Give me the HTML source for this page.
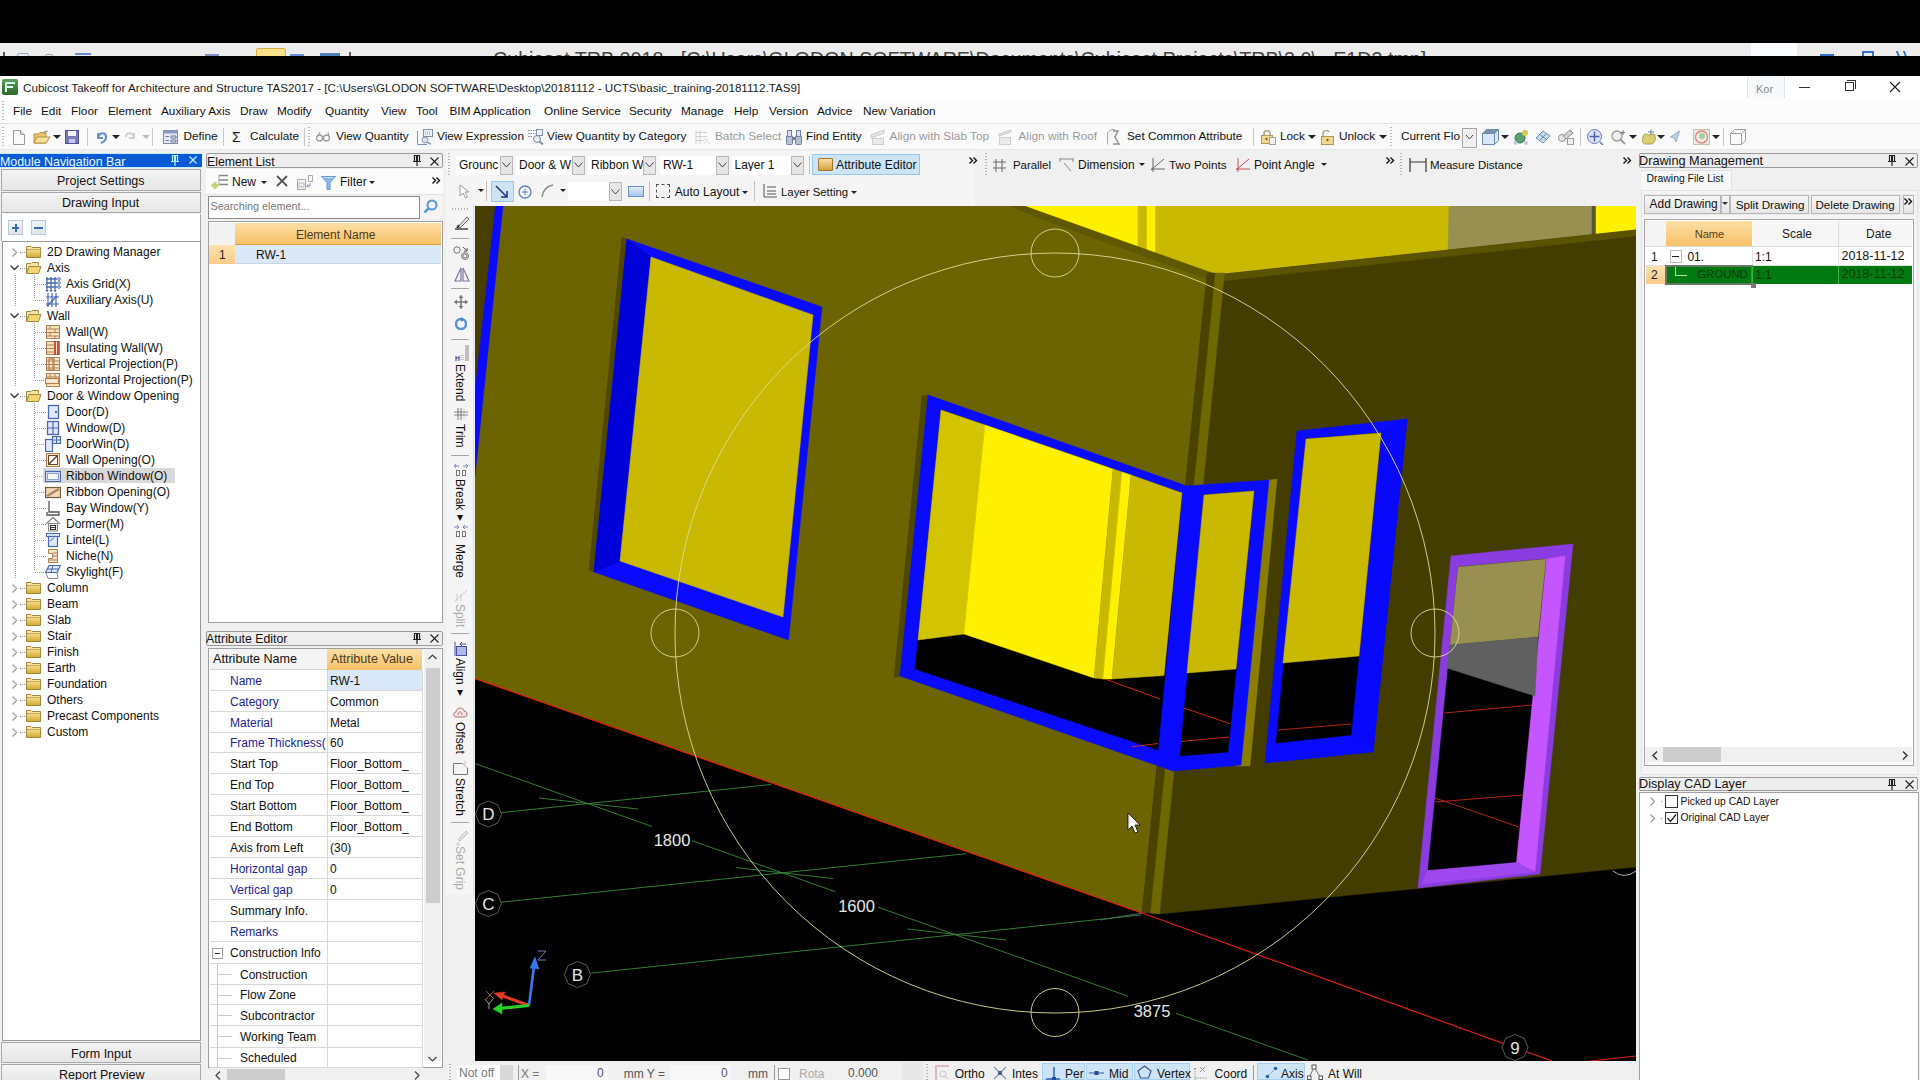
<!DOCTYPE html>
<html><head><meta charset="utf-8"><style>
html,body{margin:0;padding:0;width:1920px;height:1080px;overflow:hidden;background:#f0f0f0;font-family:"Liberation Sans", sans-serif}
body>div,body>svg{position:absolute}
div{box-sizing:border-box}
.t{white-space:pre;transform-origin:0 0}
</style></head><body>
<div style="left:0px;top:0px;width:1920px;height:43px;background:#000"></div>
<div style="left:0px;top:43px;width:1920px;height:13px;background:#ececec;overflow:hidden"></div>
<div style="left:0px;top:56px;width:1920px;height:20px;background:#000"></div>
<div style="left:0;top:43px;width:1920px;height:13px;overflow:hidden"><div class="t" style="position:absolute;left:493px;top:6px;font-size:19.7px;line-height:20px;color:#444">Cubicost TRB 2018 - [C:\Users\GLODON SOFTWARE\Documents\Cubicost Projects\TRB\3.0\...E1D3.tmp]</div><div style="position:absolute;left:256px;top:5px;width:30px;height:14px;background:#f6e08a;border:1px solid #d8b040;border-radius:2px"></div><div style="position:absolute;left:320px;top:10px;width:20px;height:6px;background:#5080c0"></div><div style="position:absolute;left:1751px;top:0;width:46px;height:14px;background:#fafcff"></div><div style="position:absolute;left:3px;top:9px;width:2px;height:5px;background:#555"></div><div style="position:absolute;left:17px;top:10px;width:12px;height:5px;border:1px solid #9aa8c0;border-radius:2px"></div><div style="position:absolute;left:45px;top:11px;width:8px;height:4px;border:1px solid #a0a0a0;border-radius:3px"></div><div style="position:absolute;left:75px;top:10px;width:16px;height:5px;border-top:2px solid #6a8ad0"></div><div style="position:absolute;left:205px;top:11px;width:14px;height:4px;border-top:2px solid #8090c0"></div><div style="position:absolute;left:290px;top:11px;width:14px;height:4px;border-top:2px solid #6a90d8"></div><div style="position:absolute;left:349px;top:9px;width:2px;height:5px;background:#555"></div><div style="position:absolute;left:1820px;top:11px;width:14px;height:2px;background:#3a70c8"></div><div style="position:absolute;left:1862px;top:8px;width:12px;height:6px;border:2px solid #3a70c8;border-bottom:0"></div><div style="position:absolute;left:1897px;top:8px;width:9px;height:6px;border-left:2px solid #3a70c8;border-right:2px solid #3a70c8;transform:skewX(20deg)"></div></div>
<div style="left:0px;top:76px;width:1920px;height:22px;background:#fff"></div>
<div style="left:2px;top:79px;width:16px;height:16px;background:linear-gradient(#5aa05a,#2a6a2a);border-radius:2px"></div>
<div style="left:5px;top:82px;width:2px;height:10px;background:#dfe"></div><div style="left:5px;top:82px;width:10px;height:2px;background:#dfe"></div><div style="left:7px;top:86px;width:6px;height:2px;background:#dfe"></div>
<div class="t" style="left:23px;top:82.44px;font-size:11.65px;line-height:11.65px;color:#1a1a1a;">Cubicost Takeoff for Architecture and Structure TAS2017 - [C:\Users\GLODON SOFTWARE\Desktop\20181112 - UCTS\basic_training-20181112.TAS9]</div>
<div style="left:1747px;top:76px;width:38px;height:24px;background:#f6f9fc;border-left:1px solid #e0e4e8;border-right:1px solid #e0e4e8"></div>
<div class="t" style="left:1756px;top:83.69px;font-size:11px;line-height:11px;color:#888;">Kor</div>
<div style="left:1799px;top:87px;width:11px;height:1px;background:#333"></div>
<div style="left:1845px;top:82px;width:9px;height:9px;border:1px solid #333;background:#fff"></div>
<div style="left:1847px;top:80px;width:9px;height:9px;border-top:1px solid #333;border-right:1px solid #333"></div>
<svg style="left:1889px;top:81px" width="12" height="12"><path d="M1,1L11,11M11,1L1,11" stroke="#222" stroke-width="1.1"/></svg>
<div style="left:0px;top:98px;width:1920px;height:26px;background:#fcfcfc"></div>
<div style="left:0px;top:123px;width:1920px;height:1px;background:#e3e3e3"></div>
<div style="left:2px;top:101px;width:2px;height:20px;background:repeating-linear-gradient(#b8b8b8 0 1px,transparent 1px 3px)"></div>
<div class="t" style="left:13px;top:106.01px;font-size:11.8px;line-height:11.8px;color:#111;">File</div>
<div class="t" style="left:41px;top:106.01px;font-size:11.8px;line-height:11.8px;color:#111;">Edit</div>
<div class="t" style="left:71px;top:106.01px;font-size:11.8px;line-height:11.8px;color:#111;">Floor</div>
<div class="t" style="left:108px;top:106.01px;font-size:11.8px;line-height:11.8px;color:#111;">Element</div>
<div class="t" style="left:161px;top:106.01px;font-size:11.8px;line-height:11.8px;color:#111;">Auxiliary Axis</div>
<div class="t" style="left:240px;top:106.01px;font-size:11.8px;line-height:11.8px;color:#111;">Draw</div>
<div class="t" style="left:277px;top:106.01px;font-size:11.8px;line-height:11.8px;color:#111;">Modify</div>
<div class="t" style="left:325px;top:106.01px;font-size:11.8px;line-height:11.8px;color:#111;">Quantity</div>
<div class="t" style="left:381px;top:106.01px;font-size:11.8px;line-height:11.8px;color:#111;">View</div>
<div class="t" style="left:416px;top:106.01px;font-size:11.8px;line-height:11.8px;color:#111;">Tool</div>
<div class="t" style="left:449.5px;top:106.01px;font-size:11.8px;line-height:11.8px;color:#111;">BIM Application</div>
<div class="t" style="left:544px;top:106.01px;font-size:11.8px;line-height:11.8px;color:#111;">Online Service</div>
<div class="t" style="left:629px;top:106.01px;font-size:11.8px;line-height:11.8px;color:#111;">Security</div>
<div class="t" style="left:681px;top:106.01px;font-size:11.8px;line-height:11.8px;color:#111;">Manage</div>
<div class="t" style="left:734px;top:106.01px;font-size:11.8px;line-height:11.8px;color:#111;">Help</div>
<div class="t" style="left:769px;top:106.01px;font-size:11.8px;line-height:11.8px;color:#111;">Version</div>
<div class="t" style="left:817px;top:106.01px;font-size:11.8px;line-height:11.8px;color:#111;">Advice</div>
<div class="t" style="left:863px;top:106.01px;font-size:11.8px;line-height:11.8px;color:#111;">New Variation</div>
<div style="left:0px;top:124px;width:1920px;height:26px;background:#fafafa"></div>
<div style="left:0px;top:149px;width:1920px;height:1px;background:#e8e8e8"></div>
<div style="left:2px;top:127px;width:2px;height:20px;background:repeating-linear-gradient(#b8b8b8 0 1px,transparent 1px 3px)"></div>
<div style="left:308px;top:127px;width:2px;height:20px;background:repeating-linear-gradient(#b8b8b8 0 1px,transparent 1px 3px)"></div>
<div style="left:1390px;top:127px;width:2px;height:20px;background:repeating-linear-gradient(#b8b8b8 0 1px,transparent 1px 3px)"></div>
<div style="left:87px;top:128px;width:1px;height:18px;background:#c8c8c8"></div>
<div style="left:152px;top:128px;width:1px;height:18px;background:#c8c8c8"></div>
<div style="left:223px;top:128px;width:1px;height:18px;background:#c8c8c8"></div>
<div style="left:304px;top:128px;width:1px;height:18px;background:#c8c8c8"></div>
<div style="left:1253px;top:128px;width:1px;height:18px;background:#c8c8c8"></div>
<div style="left:1580px;top:128px;width:1px;height:18px;background:#c8c8c8"></div>
<div style="left:1723px;top:128px;width:1px;height:18px;background:#c8c8c8"></div>
<div class="t" style="left:183.5px;top:131.01px;font-size:11.8px;line-height:11.8px;color:#111;">Define</div>
<div class="t" style="left:250px;top:131.01px;font-size:11.8px;line-height:11.8px;color:#111;">Calculate</div>
<div class="t" style="left:336px;top:131.01px;font-size:11.8px;line-height:11.8px;color:#111;">View Quantity</div>
<div class="t" style="left:437px;top:131.01px;font-size:11.8px;line-height:11.8px;color:#111;">View Expression</div>
<div class="t" style="left:547px;top:131.01px;font-size:11.8px;line-height:11.8px;color:#111;">View Quantity by Category</div>
<div class="t" style="left:715px;top:131.01px;font-size:11.8px;line-height:11.8px;color:#9a9a9a;">Batch Select</div>
<div class="t" style="left:806px;top:131.01px;font-size:11.8px;line-height:11.8px;color:#111;">Find Entity</div>
<div class="t" style="left:889.6px;top:131.01px;font-size:11.8px;line-height:11.8px;color:#9a9a9a;">Align with Slab Top</div>
<div class="t" style="left:1018.4px;top:131.01px;font-size:11.8px;line-height:11.8px;color:#9a9a9a;">Align with Roof</div>
<div class="t" style="left:1127px;top:131.01px;font-size:11.8px;line-height:11.8px;color:#111;">Set Common Attribute</div>
<div class="t" style="left:1280px;top:131.01px;font-size:11.8px;line-height:11.8px;color:#111;">Lock</div>
<div class="t" style="left:1339px;top:131.01px;font-size:11.8px;line-height:11.8px;color:#111;">Unlock</div>
<div class="t" style="left:1401px;top:131.01px;font-size:11.8px;line-height:11.8px;color:#111;">Current Flo</div>
<svg style="left:13px;top:130px" width="12" height="15" viewBox="0 0 12 15"><path d="M0.5,0.5H7.5L11.5,4.5V14.5H0.5Z" fill="#fafafa" stroke="#9a9a9a"/><path d="M7.5,0.5V4.5H11.5" fill="#e0e0e0" stroke="#9a9a9a"/></svg>
<svg style="left:33px;top:129px" width="18" height="16" viewBox="0 0 18 16"><path d="M1,5H6L7,3.5H13V14H1Z" fill="#e8c870" stroke="#b89040"/><path d="M1,14L4,8H17L13,14Z" fill="#f8e0a0" stroke="#b89040"/><path d="M10,5C11,2 13,1.5 15,2.5" stroke="#a0a0a0" fill="none" stroke-width="1.2"/></svg>
<svg style="left:65px;top:130px" width="14" height="14" viewBox="0 0 14 14"><rect x="0.5" y="0.5" width="13" height="13" fill="#7878b8" stroke="#5050a0"/><rect x="3" y="1" width="8" height="5" fill="#f0f0f8"/><rect x="4" y="9" width="6" height="4" fill="#c8c8e0"/></svg>
<svg style="left:95px;top:130px" width="13" height="14" viewBox="0 0 13 14"><path d="M3,3L3,8L8,8" fill="none" stroke="#6a90d0" stroke-width="2"/><path d="M3,7C5,2 11,2 11,7C11,10 9,12 6,13" fill="none" stroke="#6a90d0" stroke-width="2.2"/></svg>
<svg style="left:125px;top:130px" width="12" height="13" viewBox="0 0 12 13"><path d="M9,3L9,8L4,8" fill="none" stroke="#d0d0d0" stroke-width="2"/><path d="M9,7C7,2 1,2 1,7" fill="none" stroke="#d0d0d0" stroke-width="2"/></svg>
<svg style="left:163px;top:130px" width="15" height="14" viewBox="0 0 15 14"><rect x="0.5" y="0.5" width="14" height="13" fill="#e4eaf4" stroke="#7a8aa8"/><rect x="0.5" y="0.5" width="14" height="3" fill="#8a9ac0"/><path d="M2.5,6.5H6M8,6H13V8H8ZM2.5,10.5H6M8,10H13V12H8Z" stroke="#6a7a98" fill="none"/></svg>
<svg style="left:316px;top:131px" width="14" height="11" viewBox="0 0 14 11"><circle cx="3.5" cy="7" r="3" fill="none" stroke="#999" stroke-width="1.3"/><circle cx="10.5" cy="7" r="3" fill="none" stroke="#999" stroke-width="1.3"/><path d="M1,6L4,1M13,6L12,1" stroke="#999"/></svg>
<svg style="left:417px;top:129px" width="16" height="16" viewBox="0 0 16 16"><rect x="6.5" y="0.5" width="9" height="7" fill="#eef2fa" stroke="#8090b0"/><path d="M8,3H14M8,5H14" stroke="#8090b0" stroke-dasharray="1,1"/><path d="M0.5,2V15.5H10" stroke="#8090b0" fill="none"/><circle cx="8" cy="11" r="3" fill="#d8e0f0" stroke="#8a9ab8"/><path d="M10,13L14,15" stroke="#8a9ab8" stroke-width="1.5"/></svg>
<svg style="left:527px;top:129px" width="17" height="16" viewBox="0 0 17 16"><path d="M1,1.5H9M1,4.5H9M1,7.5H6" stroke="#888" stroke-dasharray="1.5,1"/><rect x="9.5" y="0.5" width="6" height="6" fill="#eef2fa" stroke="#8090b0"/><circle cx="10" cy="10" r="3.5" fill="#e8eef8" stroke="#7a8aa8"/><path d="M12.5,12.5L16,15.5" stroke="#7a8aa8" stroke-width="1.8"/></svg>
<svg style="left:695px;top:129px" width="16" height="16" viewBox="0 0 16 16"><path d="M1,1V15M1,3.5H12M1,7.5H12M1,11.5H9M5,1V15" stroke="#d0d0d0" fill="none"/><path d="M9,9L15,15M13,9L9,15" stroke="#d8d8d8"/></svg>
<svg style="left:786px;top:129px" width="16" height="16" viewBox="0 0 16 16"><rect x="0.5" y="6.5" width="6" height="9" rx="1" fill="#b8c0d8" stroke="#7080a8"/><rect x="9.5" y="6.5" width="6" height="9" rx="1" fill="#b8c0d8" stroke="#7080a8"/><rect x="1.5" y="1.5" width="4" height="6" fill="#d8e0f0" stroke="#7080a8"/><rect x="10.5" y="1.5" width="4" height="6" fill="#d8e0f0" stroke="#7080a8"/><rect x="6" y="8" width="4" height="3" fill="#7080a8"/></svg>
<svg style="left:870px;top:129px" width="16" height="16" viewBox="0 0 16 16"><path d="M1,6L14,1V4L1,9Z" fill="#e8e8e8" stroke="#c8c8c8"/><rect x="2.5" y="9.5" width="11" height="6" fill="#eaeaea" stroke="#cfcfcf"/></svg>
<svg style="left:998px;top:129px" width="15" height="16" viewBox="0 0 15 16"><path d="M1,5L13,1V3L1,7Z" fill="#e8e8e8" stroke="#c8c8c8"/><rect x="1.5" y="8.5" width="11" height="7" fill="#eaeaea" stroke="#cfcfcf"/></svg>
<svg style="left:1107px;top:129px" width="16" height="16" viewBox="0 0 16 16"><path d="M0.5,15.5V4L4,0.5H8" stroke="#a8a8a8" fill="#f4f4f4"/><path d="M6,2H11L8,8L12,15H6" stroke="#909090" fill="none" stroke-width="1.5"/></svg>
<svg style="left:1260px;top:129px" width="16" height="16" viewBox="0 0 16 16"><path d="M4,7V4C4,1 10,1 10,4V7" stroke="#a8a890" fill="none" stroke-width="1.5"/><rect x="1.5" y="6.5" width="11" height="8" fill="#f0d890" stroke="#b09850"/><rect x="9.5" y="8.5" width="6" height="7" fill="#f4f4f4" stroke="#a0a0a0"/><circle cx="6.5" cy="10" r="1.2" fill="#7a6030"/></svg>
<svg style="left:1320px;top:129px" width="15" height="16" viewBox="0 0 15 16"><path d="M3,7V4C3,1 8,1 9,3" stroke="#a8a890" fill="none" stroke-width="1.5"/><rect x="1.5" y="7.5" width="12" height="8" fill="#f0d890" stroke="#b09850"/><circle cx="7.5" cy="11" r="1.2" fill="#7a6030"/></svg>
<svg style="left:1482px;top:129px" width="17" height="16" viewBox="0 0 17 16"><path d="M0.5,4.5L4.5,0.5H16.5V11.5L12.5,15.5H0.5Z" fill="#d8e8f8" stroke="#6a88a8"/><path d="M0.5,4.5H12.5V15.5M12.5,4.5L16.5,0.5" stroke="#6a88a8" fill="none"/><path d="M4.5,0.5H16.5L12.5,4.5H0.5Z" fill="#7890b0"/></svg>
<svg style="left:1513px;top:129px" width="16" height="16" viewBox="0 0 16 16"><circle cx="7" cy="9" r="5" fill="#5aa070" stroke="#3a7a50"/><circle cx="12" cy="4" r="3" fill="#d8c860"/><circle cx="2.5" cy="14" r="2" fill="#c0c8e0"/><circle cx="13" cy="14" r="2" fill="#c0c8e0"/></svg>
<svg style="left:1535px;top:130px" width="16" height="14" viewBox="0 0 16 14"><path d="M1,8L8,1L15,6L8,13Z" fill="#c8dcf0" stroke="#6a90c0"/><path d="M4.5,4.5L11.5,9.5M11.5,3.5L4.5,10.5" stroke="#6a90c0"/></svg>
<svg style="left:1558px;top:129px" width="16" height="16" viewBox="0 0 16 16"><circle cx="4" cy="9" r="3.5" fill="#e8e8e8" stroke="#909090"/><path d="M5,7L12,1L15,4L8,10Z" fill="#d0d0d0" stroke="#909090"/><rect x="9.5" y="9.5" width="6" height="6" fill="#f0f0f0" stroke="#a0a0a0"/></svg>
<svg style="left:1587px;top:129px" width="17" height="16" viewBox="0 0 17 16"><circle cx="7.5" cy="7.5" r="7" fill="#dde4f8" stroke="#6a78b8"/><path d="M7.5,2.5V12.5M2.5,7.5H12.5" stroke="#4a60b0" stroke-width="1.5"/><path d="M13,13L16,16" stroke="#6a78b8" stroke-width="1.5"/></svg>
<svg style="left:1611px;top:129px" width="16" height="16" viewBox="0 0 16 16"><circle cx="6" cy="7" r="5" fill="#eef0f4" stroke="#9a9a9a" stroke-width="1.3"/><path d="M9,10L14,15" stroke="#9a9a9a" stroke-width="2"/><path d="M12,1V6M10,3.5H14" stroke="#777"/></svg>
<svg style="left:1641px;top:129px" width="16" height="16" viewBox="0 0 16 16"><path d="M2,8C2,4 6,5 8,6L13,5C15,7 15,13 11,15H4C1,14 1,11 2,8Z" fill="#d8d070" stroke="#a8a050"/><path d="M10,0.5V6M7,3H13" stroke="#6a80a8"/></svg>
<svg style="left:1670px;top:130px" width="10" height="13" viewBox="0 0 10 13"><path d="M0.5,7L9.5,1L6,12L4,8Z" fill="#b8d0e8" stroke="#90b0d0"/></svg>
<svg style="left:1693px;top:129px" width="17" height="16" viewBox="0 0 17 16"><rect x="0.5" y="0.5" width="16" height="15" fill="#f0ece0" stroke="#c8c0b0"/><circle cx="8.5" cy="8" r="6" fill="none" stroke="#e08080" stroke-width="1.3"/><circle cx="9" cy="7" r="3" fill="#a0d0a0"/></svg>
<svg style="left:1730px;top:129px" width="16" height="16" viewBox="0 0 16 16"><path d="M0.5,4.5L4.5,0.5H15.5V11.5L11.5,15.5H0.5Z" fill="#fafafa" stroke="#a0a0a0"/><path d="M0.5,4.5H11.5V15.5M11.5,4.5L15.5,0.5" stroke="#a0a0a0" fill="none"/></svg>
<div style="left:53px;top:135px;width:0;height:0;border-left:4px solid transparent;border-right:4px solid transparent;border-top:4px solid #222"></div>
<div style="left:112px;top:135px;width:0;height:0;border-left:4px solid transparent;border-right:4px solid transparent;border-top:4px solid #222"></div>
<div style="left:142px;top:135px;width:0;height:0;border-left:4px solid transparent;border-right:4px solid transparent;border-top:4px solid #bbb"></div>
<div style="left:1308px;top:135px;width:0;height:0;border-left:4px solid transparent;border-right:4px solid transparent;border-top:4px solid #222"></div>
<div style="left:1379px;top:135px;width:0;height:0;border-left:4px solid transparent;border-right:4px solid transparent;border-top:4px solid #222"></div>
<div style="left:1501px;top:135px;width:0;height:0;border-left:4px solid transparent;border-right:4px solid transparent;border-top:4px solid #222"></div>
<div style="left:1629px;top:135px;width:0;height:0;border-left:4px solid transparent;border-right:4px solid transparent;border-top:4px solid #222"></div>
<div style="left:1657px;top:135px;width:0;height:0;border-left:4px solid transparent;border-right:4px solid transparent;border-top:4px solid #222"></div>
<div style="left:1712px;top:135px;width:0;height:0;border-left:4px solid transparent;border-right:4px solid transparent;border-top:4px solid #222"></div>
<div class="t" style="left:232px;top:129.65px;font-size:14px;line-height:14px;color:#222;">Σ</div>
<div style="left:1462px;top:128px;width:15px;height:20px;background:#f0f0f0;border:1px solid #a8a8a8"></div>
<svg style="left:1465px;top:134px" width="9" height="6"><path d="M1,1L4.5,5L8,1" stroke="#444" fill="none"/></svg>
<svg width="1161" height="855" viewBox="475 206 1161 855" style="position:absolute;left:475px;top:206px;display:block">
<rect x="475" y="206" width="1161" height="855" fill="#000"/>
<polygon points="1020,206 1636,206 1636,300 1020,300" fill="#c9b900" stroke="#c9b900" stroke-width="0.5"/>
<polygon points="1020,206 1140,206 1140,300 1020,300" fill="#fff000" stroke="#fff000" stroke-width="0.5"/>
<polygon points="1138,206 1147,206 1147,300 1138,300" fill="#c9b900" stroke="#c9b900" stroke-width="0.5"/>
<polygon points="1147,206 1155,206 1155,300 1147,300" fill="#fff000" stroke="#fff000" stroke-width="0.5"/>
<polygon points="1449,206 1594,206 1594,300 1447,300" fill="#989050" stroke="#989050" stroke-width="0.5"/>
<polygon points="1592,206 1596,206 1596,300 1592,300" fill="#5a5430" stroke="#5a5430" stroke-width="0.5"/>
<polygon points="1596,206 1636,206 1636,300 1596,300" fill="#fff000" stroke="#fff000" stroke-width="0.5"/>
<polygon points="475,206 1024,206 1207,273 1142,913 475,678.5" fill="#6c6400" stroke="#6c6400" stroke-width="0.5"/>
<polygon points="1024,206 1215,274 1207,279 1036,217 1010,206" fill="#605800" stroke="#605800" stroke-width="0.5"/>
<polygon points="475,206 496,206 475,392" fill="#463f00" stroke="#463f00" stroke-width="0.5"/>
<polygon points="495.5,206 503,206 475,476 475,392" fill="#0a0aff" stroke="#0a0aff" stroke-width="0.5"/>
<polygon points="1215,275 1636,230 1636,867 1159.5,914" fill="#433d00" stroke="#433d00" stroke-width="0.5"/>
<polygon points="1215,275 1636,230 1636,236 1222,281" fill="#5a5300" stroke="#5a5300" stroke-width="0.5"/>
<polygon points="1207,273 1215.5,273 1150.5,913 1142,913" fill="#4a4300" stroke="#4a4300" stroke-width="0.5"/>
<polygon points="1215.5,273 1224.5,273 1159.5,914 1150.5,913" fill="#6e6800" stroke="#6e6800" stroke-width="0.5"/>
<line x1="475" y1="678.5" x2="1142" y2="913" stroke="#e02010" stroke-width="1.3"/>
<line x1="1142" y1="913" x2="1552" y2="1061" stroke="#e02010" stroke-width="1.2"/>
<line x1="1590" y1="1061" x2="1636" y2="1056" stroke="#e02010" stroke-width="1.2"/>
<line x1="1100" y1="920" x2="1142" y2="913" stroke="#506070" stroke-width="1"/>
<polygon points="622,237 627,239 594,572 589,570" fill="#4e4800" stroke="#4e4800" stroke-width="0.5"/>
<polygon points="627,239 822,307 788.5,640 594,572" fill="#0a0aff" stroke="#0a0aff" stroke-width="0.5"/>
<polygon points="627,239 651,257 620,561 594,572" fill="#0000d8" stroke="#0000d8" stroke-width="0.5"/>
<polygon points="651,257 813,315 783,617 620,561" fill="#c9b900" stroke="#c9b900" stroke-width="0.5"/>
<polygon points="1262,481 1277,479 1250,766 1236,766" fill="#8a7e00" stroke="#8a7e00" stroke-width="0.5"/>
<polygon points="922,396 928,395 900,676 894,678" fill="#4e4800" stroke="#4e4800" stroke-width="0.5"/>
<polygon points="928,395 1187,486 1269,480 1241,765 1173,771 900,676" fill="#0a0aff" stroke="#0a0aff" stroke-width="0.5"/>
<polygon points="941,410 1182,493 1158,750 915,669" fill="#000" stroke="#000" stroke-width="0.5"/>
<polygon points="941,410 985,425 964,634 918,640" fill="#d2c400" stroke="#d2c400" stroke-width="0.5"/>
<polygon points="985,425 1113,469 1094,678 964,634" fill="#fff000" stroke="#fff000" stroke-width="0.5"/>
<polygon points="1113,469 1122,472 1103,679 1094,678" fill="#c8b800" stroke="#c8b800" stroke-width="0.5"/>
<polygon points="1122,472 1131,475 1112,679 1103,679" fill="#fff000" stroke="#fff000" stroke-width="0.5"/>
<polygon points="1131,475 1182,493 1164,675.5 1112,679" fill="#c9b900" stroke="#c9b900" stroke-width="0.5"/>
<line x1="1105" y1="679" x2="1160" y2="699" stroke="#e03010" stroke-width="0.9"/>
<line x1="1132" y1="746.7" x2="1158" y2="743.5" stroke="#e03010" stroke-width="0.9"/>
<polygon points="1204,495 1254,491 1228,752 1180,756" fill="#000" stroke="#000" stroke-width="0.5"/>
<polygon points="1204,495 1254,491 1236,669 1187,673" fill="#c9b900" stroke="#c9b900" stroke-width="0.5"/>
<line x1="1181" y1="741.5" x2="1229" y2="737" stroke="#e03010" stroke-width="0.9"/>
<line x1="1184" y1="708" x2="1230" y2="723.7" stroke="#e03010" stroke-width="0.9"/>
<polygon points="1297,431 1407,419 1373,752 1265,763" fill="#0a0aff" stroke="#0a0aff" stroke-width="0.5"/>
<polygon points="1381,433 1407,419 1373,752 1351,735" fill="#0808fa" stroke="#0808fa" stroke-width="0.5"/>
<polygon points="1306,439 1381,433 1351,735 1276,743" fill="#000" stroke="#000" stroke-width="0.5"/>
<polygon points="1306,439 1381,433 1359,656 1283,663" fill="#c9b900" stroke="#c9b900" stroke-width="0.5"/>
<line x1="1278" y1="730" x2="1351" y2="724" stroke="#e03010" stroke-width="0.8"/>
<polygon points="1451,556 1573,544 1540,874 1418,888" fill="#8a3ce0" stroke="#8a3ce0" stroke-width="0.5"/>
<polygon points="1546,559 1565,556 1535,872 1516,862" fill="#c455ff" stroke="#c455ff" stroke-width="0.5"/>
<polygon points="1428,870 1516,862 1535,872 1422,884" fill="#a048f0" stroke="#a048f0" stroke-width="0.5"/>
<polygon points="1458,567 1546,559 1516,862 1428,870" fill="#000" stroke="#000" stroke-width="0.5"/>
<polygon points="1458,567 1546,559 1538,637 1450,645" fill="#989050" stroke="#989050" stroke-width="0.5"/>
<polygon points="1450,645 1538,637 1535,696 1447,668" fill="#606060" stroke="#606060" stroke-width="0.5"/>
<line x1="1444" y1="713" x2="1532" y2="705" stroke="#e03010" stroke-width="0.8"/>
<line x1="1435" y1="802" x2="1523" y2="795" stroke="#e03010" stroke-width="0.8"/>
<line x1="1435" y1="798" x2="1519" y2="827" stroke="#e03010" stroke-width="0.8"/>
<line x1="501.5" y1="812.6" x2="771" y2="784.5" stroke="#3a8a3a" stroke-width="0.9"/>
<line x1="501.5" y1="902.2" x2="966" y2="853.7" stroke="#3a8a3a" stroke-width="0.9"/>
<line x1="590.5" y1="973.2" x2="1141" y2="915" stroke="#3a8a3a" stroke-width="0.9"/>
<line x1="475.5" y1="763.7" x2="652" y2="826.5" stroke="#3a8a3a" stroke-width="0.9"/>
<line x1="692" y1="840.7" x2="835" y2="891.6" stroke="#3a8a3a" stroke-width="0.9"/>
<line x1="878" y1="907.2" x2="1128" y2="996.2" stroke="#3a8a3a" stroke-width="0.9"/>
<line x1="1176" y1="1013.3" x2="1308" y2="1060" stroke="#3a8a3a" stroke-width="0.9"/>
<line x1="539" y1="798" x2="638" y2="809" stroke="#3a8a3a" stroke-width="0.9"/>
<line x1="736" y1="867.6" x2="833" y2="878.5" stroke="#3a8a3a" stroke-width="0.9"/>
<line x1="907.5" y1="929" x2="1006" y2="940" stroke="#3a8a3a" stroke-width="0.9"/>
<circle cx="1055" cy="633" r="380" fill="none" stroke="#dcdc98" stroke-width="0.9"/>
<circle cx="1055" cy="253" r="24" fill="none" stroke="#dcdc98" stroke-width="0.9"/>
<circle cx="675" cy="633" r="24" fill="none" stroke="#dcdc98" stroke-width="0.9"/>
<circle cx="1435" cy="633" r="24" fill="none" stroke="#dcdc98" stroke-width="0.9"/>
<circle cx="1055" cy="1012.5" r="24" fill="none" stroke="#dcdc98" stroke-width="0.9"/>
<polygon points="501.50,814.00 497.69,823.19 488.50,827.00 479.31,823.19 475.50,814.00 479.31,804.81 488.50,801.00 497.69,804.81" fill="#000" stroke="#5e6a5e" stroke-width="0.9"/><text x="488.5" y="820.2" fill="#e4e4e4" font-size="17" text-anchor="middle" font-family="Liberation Sans, sans-serif">D</text>
<polygon points="501.50,903.50 497.69,912.69 488.50,916.50 479.31,912.69 475.50,903.50 479.31,894.31 488.50,890.50 497.69,894.31" fill="#000" stroke="#5e6a5e" stroke-width="0.9"/><text x="488.5" y="909.7" fill="#e4e4e4" font-size="17" text-anchor="middle" font-family="Liberation Sans, sans-serif">C</text>
<polygon points="590.50,974.50 586.69,983.69 577.50,987.50 568.31,983.69 564.50,974.50 568.31,965.31 577.50,961.50 586.69,965.31" fill="#000" stroke="#5e6a5e" stroke-width="0.9"/><text x="577.5" y="980.7" fill="#e4e4e4" font-size="17" text-anchor="middle" font-family="Liberation Sans, sans-serif">B</text>
<polygon points="1528.00,1047.50 1524.19,1056.69 1515.00,1060.50 1505.81,1056.69 1502.00,1047.50 1505.81,1038.31 1515.00,1034.50 1524.19,1038.31" fill="#000" stroke="#5e6a5e" stroke-width="0.9"/><text x="1515" y="1053.7" fill="#e4e4e4" font-size="17" text-anchor="middle" font-family="Liberation Sans, sans-serif">9</text>
<text x="672" y="846" fill="#e8e8e8" font-size="16.5" text-anchor="middle" font-family="Liberation Sans, sans-serif">1800</text>
<text x="856.5" y="912" fill="#e8e8e8" font-size="16.5" text-anchor="middle" font-family="Liberation Sans, sans-serif">1600</text>
<text x="1152" y="1017" fill="#e8e8e8" font-size="16.5" text-anchor="middle" font-family="Liberation Sans, sans-serif">3875</text>
<line x1="529" y1="1005.5" x2="534" y2="966" stroke="#3a78f0" stroke-width="2.6"/>
<polygon points="530,968 539,969 535,957" fill="#3a78f0" stroke="#3a78f0" stroke-width="0.5"/>
<path d="M538,951H546L538,960H546" stroke="#7090d0" fill="none" stroke-width="0.9"/>
<line x1="529" y1="1005.5" x2="503" y2="996" stroke="#e03a28" stroke-width="3"/>
<polygon points="505,992 502,1000 494,993" fill="#e03a28" stroke="#e03a28" stroke-width="0.5"/>
<path d="M486,991L494,999M494,991L486,999" stroke="#c05040" stroke-width="0.9"/>
<line x1="529" y1="1005.5" x2="500" y2="1008.5" stroke="#28d028" stroke-width="3.2"/>
<polygon points="502,1003 502,1014 493,1009" fill="#28d028" stroke="#28d028" stroke-width="0.5"/>
<path d="M485,999L489,1004L493,999M489,1004V1009" stroke="#b0b0b0" fill="none" stroke-width="0.9"/>
<path d="M1613,871 Q1624,880 1636,871" stroke="#c8c8b0" fill="none" stroke-width="0.9"/>
<path d="M1128,813 L1128,830 L1132,826 L1135,833 L1138,832 L1135,825 L1140,825 Z" fill="#fff" stroke="#000" stroke-width="0.8"/>
</svg>
<div style="left:0px;top:150px;width:205px;height:911px;background:#f0f0f0"></div>
<div style="left:0px;top:153px;width:202px;height:15px;background:#0a5ad8;border-top:1px solid #bfefff;border-bottom:1px solid #bfefff"></div>
<div class="t" style="left:0px;top:155.50px;font-size:12.4px;line-height:12.4px;color:#e8fbff;">Module Navigation Bar</div>
<svg style="left:171px;top:155px" width="8" height="11"><path d="M1.5,0.5H6.5V6.5H1.5Z M0,6.5H8 M4,6.5V11" stroke="#b8f4ff" fill="none" stroke-width="1.2"/><rect x="3" y="1" width="2" height="5" fill="#b8f4ff"/></svg>
<svg style="left:189px;top:156px" width="8" height="8"><path d="M0.5,0.5L7.5,7.5M7.5,0.5L0.5,7.5" stroke="#b8f4ff" stroke-width="1.2"/></svg>
<div style="left:1px;top:169px;width:200px;height:22px;background:linear-gradient(#f4f4f4,#e6e6e6);border:1px solid #a8a8a8"></div>
<div style="left:1px;top:192px;width:200px;height:21px;background:linear-gradient(#f4f4f4,#e6e6e6);border:1px solid #a8a8a8"></div>
<div class="t" style="left:57px;top:175.42px;font-size:12.5px;line-height:12.5px;color:#111;">Project Settings</div>
<div class="t" style="left:62px;top:196.82px;font-size:12.5px;line-height:12.5px;color:#111;">Drawing Input</div>
<div style="left:1px;top:214px;width:200px;height:27px;background:#fff;border-left:1px solid #a8a8a8;border-right:1px solid #a8a8a8"></div>
<div style="left:8px;top:220px;width:15px;height:15px;background:linear-gradient(#f0f4fa,#dde6f0);border:1px solid #c0c8d4"></div>
<div style="left:12px;top:227px;width:7px;height:2px;background:#3a6ab0"></div>
<div style="left:14.5px;top:224px;width:2px;height:8px;background:#3a6ab0"></div>
<div style="left:31px;top:220px;width:15px;height:15px;background:linear-gradient(#f0f4fa,#dde6f0);border:1px solid #c0c8d4"></div>
<div style="left:34px;top:227px;width:9px;height:2px;background:#3a6ab0"></div>
<div style="left:2px;top:241px;width:199px;height:800px;background:#fff;border:1px solid #9a9a9a"></div>
<div style="left:15px;top:275px;width:1px;height:31px;background:repeating-linear-gradient(#9a9a9a 0 1px,transparent 1px 2px)"></div>
<div style="left:15px;top:323px;width:1px;height:63px;background:repeating-linear-gradient(#9a9a9a 0 1px,transparent 1px 2px)"></div>
<div style="left:15px;top:403px;width:1px;height:175px;background:repeating-linear-gradient(#9a9a9a 0 1px,transparent 1px 2px)"></div>
<div style="left:34px;top:275px;width:1px;height:24px;background:repeating-linear-gradient(#9a9a9a 0 1px,transparent 1px 2px)"></div>
<div style="left:34px;top:323px;width:1px;height:56px;background:repeating-linear-gradient(#9a9a9a 0 1px,transparent 1px 2px)"></div>
<div style="left:34px;top:403px;width:1px;height:168px;background:repeating-linear-gradient(#9a9a9a 0 1px,transparent 1px 2px)"></div>
<div style="left:20px;top:252px;width:5px;height:1px;background:repeating-linear-gradient(90deg,#9a9a9a 0 1px,transparent 1px 2px)"></div>
<svg style="left:12px;top:248px" width="6" height="9"><path d="M0.5,0.5L4.5,4.5L0.5,8.5" stroke="#a0a0a0" fill="none" stroke-width="1.3"/></svg>
<svg style="left:25px;top:245px" width="17" height="14" viewBox="0 0 17 14"><defs><linearGradient id="fg" x1="0" y1="0" x2="0" y2="1"><stop offset="0" stop-color="#fff2b8"/><stop offset="1" stop-color="#d8a830"/></linearGradient></defs><path d="M1.5,12.5V1.5H6L7,2.5H15.5V12.5Z" fill="url(#fg)" stroke="#a08840"/><path d="M1.5,4.5H15.5" stroke="#c8a850"/></svg>
<div class="t" style="left:47px;top:245.84px;font-size:12px;line-height:12px;color:#111;">2D Drawing Manager</div>
<div style="left:20px;top:268px;width:5px;height:1px;background:repeating-linear-gradient(90deg,#9a9a9a 0 1px,transparent 1px 2px)"></div>
<svg style="left:10px;top:265px" width="9" height="6"><path d="M0.5,0.5L4.5,4.5L8.5,0.5" stroke="#333" fill="none" stroke-width="1.3"/></svg>
<svg style="left:25px;top:261px" width="17" height="14" viewBox="0 0 17 14"><path d="M1.5,12.5V2.5H6L7,1.5H13.5V4.5" fill="#f4e4a8" stroke="#a08840"/><path d="M1.5,12.5L4,5.5H16L13.5,12.5Z" fill="#f2d470" stroke="#a08840"/></svg>
<div class="t" style="left:47px;top:261.84px;font-size:12px;line-height:12px;color:#111;">Axis</div>
<div style="left:35px;top:284px;width:11px;height:1px;background:repeating-linear-gradient(90deg,#9a9a9a 0 1px,transparent 1px 2px)"></div>
<svg style="left:45px;top:276px" width="16" height="16" viewBox="0 0 16 16"><path d="M2,1V13M6,1V13M10,1V13M1,3H12M1,7H12M1,11H12" stroke="#4a68b0" stroke-width="1.3"/><circle cx="14" cy="3" r="1.3" fill="none" stroke="#4a68b0"/><circle cx="14" cy="7" r="1.3" fill="none" stroke="#4a68b0"/><circle cx="14" cy="11" r="1.3" fill="none" stroke="#4a68b0"/><circle cx="2" cy="14.5" r="1.2" fill="#4a68b0"/><circle cx="6" cy="14.5" r="1.2" fill="#4a68b0"/><circle cx="10" cy="14.5" r="1.2" fill="#4a68b0"/></svg>
<div class="t" style="left:66px;top:277.84px;font-size:12px;line-height:12px;color:#111;">Axis Grid(X)</div>
<div style="left:35px;top:300px;width:11px;height:1px;background:repeating-linear-gradient(90deg,#9a9a9a 0 1px,transparent 1px 2px)"></div>
<svg style="left:45px;top:292px" width="16" height="16" viewBox="0 0 16 16"><path d="M3,1V15M7,1V15M11,1V15M1,5H14M1,12H14" stroke="#4a68b0" stroke-width="1.2"/><path d="M2,14L12,4" stroke="#4a68b0" stroke-width="1.5"/></svg>
<div class="t" style="left:66px;top:293.84px;font-size:12px;line-height:12px;color:#111;">Auxiliary Axis(U)</div>
<div style="left:20px;top:316px;width:5px;height:1px;background:repeating-linear-gradient(90deg,#9a9a9a 0 1px,transparent 1px 2px)"></div>
<svg style="left:10px;top:313px" width="9" height="6"><path d="M0.5,0.5L4.5,4.5L8.5,0.5" stroke="#333" fill="none" stroke-width="1.3"/></svg>
<svg style="left:25px;top:309px" width="17" height="14" viewBox="0 0 17 14"><path d="M1.5,12.5V2.5H6L7,1.5H13.5V4.5" fill="#f4e4a8" stroke="#a08840"/><path d="M1.5,12.5L4,5.5H16L13.5,12.5Z" fill="#f2d470" stroke="#a08840"/></svg>
<div class="t" style="left:47px;top:309.84px;font-size:12px;line-height:12px;color:#111;">Wall</div>
<div style="left:35px;top:332px;width:11px;height:1px;background:repeating-linear-gradient(90deg,#9a9a9a 0 1px,transparent 1px 2px)"></div>
<svg style="left:45px;top:324px" width="16" height="16" viewBox="0 0 16 16"><rect x="1.5" y="1.5" width="13" height="13" fill="#f8e4c4" stroke="#b08050"/><path d="M1.5,5H14.5M1.5,8.5H14.5M1.5,12H14.5M5,1.5V5M10,5V8.5M5,8.5V12M10,12V14.5" stroke="#b08050"/></svg>
<div class="t" style="left:66px;top:325.84px;font-size:12px;line-height:12px;color:#111;">Wall(W)</div>
<div style="left:35px;top:348px;width:11px;height:1px;background:repeating-linear-gradient(90deg,#9a9a9a 0 1px,transparent 1px 2px)"></div>
<svg style="left:45px;top:340px" width="16" height="16" viewBox="0 0 16 16"><rect x="1.5" y="1.5" width="13" height="13" fill="#f8e4c4" stroke="#b08050"/><path d="M1.5,5H9M1.5,8.5H9M1.5,12H9" stroke="#b08050"/><path d="M10,1V15M13,1V15" stroke="#c03020" stroke-width="1.6"/></svg>
<div class="t" style="left:66px;top:341.84px;font-size:12px;line-height:12px;color:#111;">Insulating Wall(W)</div>
<div style="left:35px;top:364px;width:11px;height:1px;background:repeating-linear-gradient(90deg,#9a9a9a 0 1px,transparent 1px 2px)"></div>
<svg style="left:45px;top:356px" width="16" height="16" viewBox="0 0 16 16"><rect x="1.5" y="1.5" width="13" height="13" fill="#f8e4c4" stroke="#b08050"/><path d="M1.5,5H14.5M1.5,8.5H14.5M1.5,12H14.5M8,1.5V14.5" stroke="#b08050"/><rect x="4" y="3" width="5" height="11" fill="none" stroke="#b08050" stroke-width="1.2"/></svg>
<div class="t" style="left:66px;top:357.84px;font-size:12px;line-height:12px;color:#111;">Vertical Projection(P)</div>
<div style="left:35px;top:380px;width:11px;height:1px;background:repeating-linear-gradient(90deg,#9a9a9a 0 1px,transparent 1px 2px)"></div>
<svg style="left:45px;top:372px" width="16" height="16" viewBox="0 0 16 16"><rect x="1.5" y="1.5" width="13" height="13" fill="#f8e4c4" stroke="#b08050"/><path d="M1.5,5H14.5M5,1.5V5M10,1.5V5" stroke="#b08050"/><rect x="0.5" y="6.5" width="13" height="5" fill="#fbecd8" stroke="#b08050" stroke-width="1.2"/></svg>
<div class="t" style="left:66px;top:373.84px;font-size:12px;line-height:12px;color:#111;">Horizontal Projection(P)</div>
<div style="left:20px;top:396px;width:5px;height:1px;background:repeating-linear-gradient(90deg,#9a9a9a 0 1px,transparent 1px 2px)"></div>
<svg style="left:10px;top:393px" width="9" height="6"><path d="M0.5,0.5L4.5,4.5L8.5,0.5" stroke="#333" fill="none" stroke-width="1.3"/></svg>
<svg style="left:25px;top:389px" width="17" height="14" viewBox="0 0 17 14"><path d="M1.5,12.5V2.5H6L7,1.5H13.5V4.5" fill="#f4e4a8" stroke="#a08840"/><path d="M1.5,12.5L4,5.5H16L13.5,12.5Z" fill="#f2d470" stroke="#a08840"/></svg>
<div class="t" style="left:47px;top:389.84px;font-size:12px;line-height:12px;color:#111;">Door &amp; Window Opening</div>
<div style="left:35px;top:412px;width:11px;height:1px;background:repeating-linear-gradient(90deg,#9a9a9a 0 1px,transparent 1px 2px)"></div>
<svg style="left:45px;top:404px" width="16" height="16" viewBox="0 0 16 16"><rect x="3.5" y="1.5" width="10" height="13" fill="#dfe8f8" stroke="#4a68b0" stroke-width="1.3"/><path d="M11,7V9" stroke="#222" stroke-width="1.3"/></svg>
<div class="t" style="left:66px;top:405.84px;font-size:12px;line-height:12px;color:#111;">Door(D)</div>
<div style="left:35px;top:428px;width:11px;height:1px;background:repeating-linear-gradient(90deg,#9a9a9a 0 1px,transparent 1px 2px)"></div>
<svg style="left:45px;top:420px" width="16" height="16" viewBox="0 0 16 16"><rect x="2.5" y="1.5" width="11" height="13" fill="#dfe8f8" stroke="#4a68b0" stroke-width="1.3"/><path d="M8,1.5V14.5M2.5,8H13.5" stroke="#4a68b0" stroke-width="1.2"/></svg>
<div class="t" style="left:66px;top:421.84px;font-size:12px;line-height:12px;color:#111;">Window(D)</div>
<div style="left:35px;top:444px;width:11px;height:1px;background:repeating-linear-gradient(90deg,#9a9a9a 0 1px,transparent 1px 2px)"></div>
<svg style="left:45px;top:436px" width="16" height="16" viewBox="0 0 16 16"><rect x="0.5" y="3.5" width="7" height="12" fill="#dfe8f8" stroke="#4a68b0" stroke-width="1.2"/><rect x="7.5" y="0.5" width="8" height="7" fill="#dfe8f8" stroke="#4a68b0" stroke-width="1.2"/><path d="M11.5,0.5V7.5M7.5,4H15.5" stroke="#4a68b0"/></svg>
<div class="t" style="left:66px;top:437.84px;font-size:12px;line-height:12px;color:#111;">DoorWin(D)</div>
<div style="left:35px;top:460px;width:11px;height:1px;background:repeating-linear-gradient(90deg,#9a9a9a 0 1px,transparent 1px 2px)"></div>
<svg style="left:45px;top:452px" width="16" height="16" viewBox="0 0 16 16"><rect x="1.5" y="1.5" width="13" height="13" fill="#f8e4c4" stroke="#b08050"/><rect x="3.5" y="3.5" width="9" height="9" fill="#fff8ee" stroke="#6a4a2a"/><path d="M4,12L12,4" stroke="#4a3a2a" stroke-width="1.2"/></svg>
<div class="t" style="left:66px;top:453.84px;font-size:12px;line-height:12px;color:#111;">Wall Opening(O)</div>
<div style="left:35px;top:476px;width:11px;height:1px;background:repeating-linear-gradient(90deg,#9a9a9a 0 1px,transparent 1px 2px)"></div>
<div style="left:43px;top:468px;width:132px;height:15px;background:#d9d9d9"></div>
<svg style="left:45px;top:468px" width="16" height="16" viewBox="0 0 16 16"><rect x="0.5" y="3.5" width="15" height="10" fill="#dfe8f8" stroke="#4a68b0" stroke-width="1.2"/><rect x="2.5" y="5.5" width="11" height="6" fill="#f4f8ff" stroke="#8aa0d0"/></svg>
<div class="t" style="left:66px;top:469.84px;font-size:12px;line-height:12px;color:#111;">Ribbon Window(O)</div>
<div style="left:35px;top:492px;width:11px;height:1px;background:repeating-linear-gradient(90deg,#9a9a9a 0 1px,transparent 1px 2px)"></div>
<svg style="left:45px;top:484px" width="16" height="16" viewBox="0 0 16 16"><rect x="0.5" y="3.5" width="15" height="10" fill="#f0d8b8" stroke="#7a5a3a" stroke-width="1.2"/><path d="M2,12L14,5" stroke="#b08860" stroke-width="2.5"/></svg>
<div class="t" style="left:66px;top:485.84px;font-size:12px;line-height:12px;color:#111;">Ribbon Opening(O)</div>
<div style="left:35px;top:508px;width:11px;height:1px;background:repeating-linear-gradient(90deg,#9a9a9a 0 1px,transparent 1px 2px)"></div>
<svg style="left:45px;top:500px" width="16" height="16" viewBox="0 0 16 16"><path d="M4,1V12H14V15H2V12" stroke="#555" fill="none" stroke-width="1.3"/></svg>
<div class="t" style="left:66px;top:501.84px;font-size:12px;line-height:12px;color:#111;">Bay Window(Y)</div>
<div style="left:35px;top:524px;width:11px;height:1px;background:repeating-linear-gradient(90deg,#9a9a9a 0 1px,transparent 1px 2px)"></div>
<svg style="left:45px;top:516px" width="16" height="16" viewBox="0 0 16 16"><path d="M1,8L8,1.5L15,8" stroke="#888" fill="none" stroke-width="1.3"/><rect x="3.5" y="7.5" width="9" height="7.5" fill="#f4f4f4" stroke="#888"/><rect x="5.5" y="9.5" width="5" height="4" fill="none" stroke="#333"/><path d="M5.5,11.5H10.5" stroke="#333"/></svg>
<div class="t" style="left:66px;top:517.84px;font-size:12px;line-height:12px;color:#111;">Dormer(M)</div>
<div style="left:35px;top:540px;width:11px;height:1px;background:repeating-linear-gradient(90deg,#9a9a9a 0 1px,transparent 1px 2px)"></div>
<svg style="left:45px;top:532px" width="16" height="16" viewBox="0 0 16 16"><rect x="1.5" y="1.5" width="13" height="3" fill="#dfe8f8" stroke="#4a68b0"/><rect x="3.5" y="4.5" width="9" height="10" fill="#dfe8f8" stroke="#4a68b0" stroke-width="1.2"/><path d="M5,9L9,6" stroke="#4a68b0"/></svg>
<div class="t" style="left:66px;top:533.84px;font-size:12px;line-height:12px;color:#111;">Lintel(L)</div>
<div style="left:35px;top:556px;width:11px;height:1px;background:repeating-linear-gradient(90deg,#9a9a9a 0 1px,transparent 1px 2px)"></div>
<svg style="left:45px;top:548px" width="16" height="16" viewBox="0 0 16 16"><path d="M3.5,1.5H12.5V14.5H3.5V10.5H7.5V5.5H3.5Z" fill="#f8e4c4" stroke="#b08050"/><path d="M8,8H12.5M8,5H12.5M3.5,12H12.5" stroke="#b08050"/></svg>
<div class="t" style="left:66px;top:549.84px;font-size:12px;line-height:12px;color:#111;">Niche(N)</div>
<div style="left:35px;top:572px;width:11px;height:1px;background:repeating-linear-gradient(90deg,#9a9a9a 0 1px,transparent 1px 2px)"></div>
<svg style="left:45px;top:564px" width="16" height="16" viewBox="0 0 16 16"><path d="M4,1.5H15.5L12,8.5H0.5Z" fill="#dfe8f8" stroke="#4a68b0" stroke-width="1.2"/><path d="M8,1.5L6,8.5M2,5H14" stroke="#4a68b0"/><path d="M1,8.5L3,14.5H13L12,8.5" stroke="#888" fill="none"/></svg>
<div class="t" style="left:66px;top:565.84px;font-size:12px;line-height:12px;color:#111;">Skylight(F)</div>
<div style="left:20px;top:588px;width:5px;height:1px;background:repeating-linear-gradient(90deg,#9a9a9a 0 1px,transparent 1px 2px)"></div>
<svg style="left:12px;top:584px" width="6" height="9"><path d="M0.5,0.5L4.5,4.5L0.5,8.5" stroke="#a0a0a0" fill="none" stroke-width="1.3"/></svg>
<svg style="left:25px;top:581px" width="17" height="14" viewBox="0 0 17 14"><defs><linearGradient id="fg" x1="0" y1="0" x2="0" y2="1"><stop offset="0" stop-color="#fff2b8"/><stop offset="1" stop-color="#d8a830"/></linearGradient></defs><path d="M1.5,12.5V1.5H6L7,2.5H15.5V12.5Z" fill="url(#fg)" stroke="#a08840"/><path d="M1.5,4.5H15.5" stroke="#c8a850"/></svg>
<div class="t" style="left:47px;top:581.84px;font-size:12px;line-height:12px;color:#111;">Column</div>
<div style="left:20px;top:604px;width:5px;height:1px;background:repeating-linear-gradient(90deg,#9a9a9a 0 1px,transparent 1px 2px)"></div>
<svg style="left:12px;top:600px" width="6" height="9"><path d="M0.5,0.5L4.5,4.5L0.5,8.5" stroke="#a0a0a0" fill="none" stroke-width="1.3"/></svg>
<svg style="left:25px;top:597px" width="17" height="14" viewBox="0 0 17 14"><defs><linearGradient id="fg" x1="0" y1="0" x2="0" y2="1"><stop offset="0" stop-color="#fff2b8"/><stop offset="1" stop-color="#d8a830"/></linearGradient></defs><path d="M1.5,12.5V1.5H6L7,2.5H15.5V12.5Z" fill="url(#fg)" stroke="#a08840"/><path d="M1.5,4.5H15.5" stroke="#c8a850"/></svg>
<div class="t" style="left:47px;top:597.84px;font-size:12px;line-height:12px;color:#111;">Beam</div>
<div style="left:20px;top:620px;width:5px;height:1px;background:repeating-linear-gradient(90deg,#9a9a9a 0 1px,transparent 1px 2px)"></div>
<svg style="left:12px;top:616px" width="6" height="9"><path d="M0.5,0.5L4.5,4.5L0.5,8.5" stroke="#a0a0a0" fill="none" stroke-width="1.3"/></svg>
<svg style="left:25px;top:613px" width="17" height="14" viewBox="0 0 17 14"><defs><linearGradient id="fg" x1="0" y1="0" x2="0" y2="1"><stop offset="0" stop-color="#fff2b8"/><stop offset="1" stop-color="#d8a830"/></linearGradient></defs><path d="M1.5,12.5V1.5H6L7,2.5H15.5V12.5Z" fill="url(#fg)" stroke="#a08840"/><path d="M1.5,4.5H15.5" stroke="#c8a850"/></svg>
<div class="t" style="left:47px;top:613.84px;font-size:12px;line-height:12px;color:#111;">Slab</div>
<div style="left:20px;top:636px;width:5px;height:1px;background:repeating-linear-gradient(90deg,#9a9a9a 0 1px,transparent 1px 2px)"></div>
<svg style="left:12px;top:632px" width="6" height="9"><path d="M0.5,0.5L4.5,4.5L0.5,8.5" stroke="#a0a0a0" fill="none" stroke-width="1.3"/></svg>
<svg style="left:25px;top:629px" width="17" height="14" viewBox="0 0 17 14"><defs><linearGradient id="fg" x1="0" y1="0" x2="0" y2="1"><stop offset="0" stop-color="#fff2b8"/><stop offset="1" stop-color="#d8a830"/></linearGradient></defs><path d="M1.5,12.5V1.5H6L7,2.5H15.5V12.5Z" fill="url(#fg)" stroke="#a08840"/><path d="M1.5,4.5H15.5" stroke="#c8a850"/></svg>
<div class="t" style="left:47px;top:629.84px;font-size:12px;line-height:12px;color:#111;">Stair</div>
<div style="left:20px;top:652px;width:5px;height:1px;background:repeating-linear-gradient(90deg,#9a9a9a 0 1px,transparent 1px 2px)"></div>
<svg style="left:12px;top:648px" width="6" height="9"><path d="M0.5,0.5L4.5,4.5L0.5,8.5" stroke="#a0a0a0" fill="none" stroke-width="1.3"/></svg>
<svg style="left:25px;top:645px" width="17" height="14" viewBox="0 0 17 14"><defs><linearGradient id="fg" x1="0" y1="0" x2="0" y2="1"><stop offset="0" stop-color="#fff2b8"/><stop offset="1" stop-color="#d8a830"/></linearGradient></defs><path d="M1.5,12.5V1.5H6L7,2.5H15.5V12.5Z" fill="url(#fg)" stroke="#a08840"/><path d="M1.5,4.5H15.5" stroke="#c8a850"/></svg>
<div class="t" style="left:47px;top:645.84px;font-size:12px;line-height:12px;color:#111;">Finish</div>
<div style="left:20px;top:668px;width:5px;height:1px;background:repeating-linear-gradient(90deg,#9a9a9a 0 1px,transparent 1px 2px)"></div>
<svg style="left:12px;top:664px" width="6" height="9"><path d="M0.5,0.5L4.5,4.5L0.5,8.5" stroke="#a0a0a0" fill="none" stroke-width="1.3"/></svg>
<svg style="left:25px;top:661px" width="17" height="14" viewBox="0 0 17 14"><defs><linearGradient id="fg" x1="0" y1="0" x2="0" y2="1"><stop offset="0" stop-color="#fff2b8"/><stop offset="1" stop-color="#d8a830"/></linearGradient></defs><path d="M1.5,12.5V1.5H6L7,2.5H15.5V12.5Z" fill="url(#fg)" stroke="#a08840"/><path d="M1.5,4.5H15.5" stroke="#c8a850"/></svg>
<div class="t" style="left:47px;top:661.84px;font-size:12px;line-height:12px;color:#111;">Earth</div>
<div style="left:20px;top:684px;width:5px;height:1px;background:repeating-linear-gradient(90deg,#9a9a9a 0 1px,transparent 1px 2px)"></div>
<svg style="left:12px;top:680px" width="6" height="9"><path d="M0.5,0.5L4.5,4.5L0.5,8.5" stroke="#a0a0a0" fill="none" stroke-width="1.3"/></svg>
<svg style="left:25px;top:677px" width="17" height="14" viewBox="0 0 17 14"><defs><linearGradient id="fg" x1="0" y1="0" x2="0" y2="1"><stop offset="0" stop-color="#fff2b8"/><stop offset="1" stop-color="#d8a830"/></linearGradient></defs><path d="M1.5,12.5V1.5H6L7,2.5H15.5V12.5Z" fill="url(#fg)" stroke="#a08840"/><path d="M1.5,4.5H15.5" stroke="#c8a850"/></svg>
<div class="t" style="left:47px;top:677.84px;font-size:12px;line-height:12px;color:#111;">Foundation</div>
<div style="left:20px;top:700px;width:5px;height:1px;background:repeating-linear-gradient(90deg,#9a9a9a 0 1px,transparent 1px 2px)"></div>
<svg style="left:12px;top:696px" width="6" height="9"><path d="M0.5,0.5L4.5,4.5L0.5,8.5" stroke="#a0a0a0" fill="none" stroke-width="1.3"/></svg>
<svg style="left:25px;top:693px" width="17" height="14" viewBox="0 0 17 14"><defs><linearGradient id="fg" x1="0" y1="0" x2="0" y2="1"><stop offset="0" stop-color="#fff2b8"/><stop offset="1" stop-color="#d8a830"/></linearGradient></defs><path d="M1.5,12.5V1.5H6L7,2.5H15.5V12.5Z" fill="url(#fg)" stroke="#a08840"/><path d="M1.5,4.5H15.5" stroke="#c8a850"/></svg>
<div class="t" style="left:47px;top:693.84px;font-size:12px;line-height:12px;color:#111;">Others</div>
<div style="left:20px;top:716px;width:5px;height:1px;background:repeating-linear-gradient(90deg,#9a9a9a 0 1px,transparent 1px 2px)"></div>
<svg style="left:12px;top:712px" width="6" height="9"><path d="M0.5,0.5L4.5,4.5L0.5,8.5" stroke="#a0a0a0" fill="none" stroke-width="1.3"/></svg>
<svg style="left:25px;top:709px" width="17" height="14" viewBox="0 0 17 14"><defs><linearGradient id="fg" x1="0" y1="0" x2="0" y2="1"><stop offset="0" stop-color="#fff2b8"/><stop offset="1" stop-color="#d8a830"/></linearGradient></defs><path d="M1.5,12.5V1.5H6L7,2.5H15.5V12.5Z" fill="url(#fg)" stroke="#a08840"/><path d="M1.5,4.5H15.5" stroke="#c8a850"/></svg>
<div class="t" style="left:47px;top:709.84px;font-size:12px;line-height:12px;color:#111;">Precast Components</div>
<div style="left:20px;top:732px;width:5px;height:1px;background:repeating-linear-gradient(90deg,#9a9a9a 0 1px,transparent 1px 2px)"></div>
<svg style="left:12px;top:728px" width="6" height="9"><path d="M0.5,0.5L4.5,4.5L0.5,8.5" stroke="#a0a0a0" fill="none" stroke-width="1.3"/></svg>
<svg style="left:25px;top:725px" width="17" height="14" viewBox="0 0 17 14"><defs><linearGradient id="fg" x1="0" y1="0" x2="0" y2="1"><stop offset="0" stop-color="#fff2b8"/><stop offset="1" stop-color="#d8a830"/></linearGradient></defs><path d="M1.5,12.5V1.5H6L7,2.5H15.5V12.5Z" fill="url(#fg)" stroke="#a08840"/><path d="M1.5,4.5H15.5" stroke="#c8a850"/></svg>
<div class="t" style="left:47px;top:725.84px;font-size:12px;line-height:12px;color:#111;">Custom</div>
<div style="left:1px;top:1042px;width:200px;height:21px;background:linear-gradient(#f4f4f4,#e6e6e6);border:1px solid #a8a8a8"></div>
<div class="t" style="left:71px;top:1048.42px;font-size:12.5px;line-height:12.5px;color:#111;">Form Input</div>
<div style="left:1px;top:1064px;width:200px;height:20px;background:linear-gradient(#f4f4f4,#e6e6e6);border:1px solid #a8a8a8"></div>
<div class="t" style="left:59px;top:1069.42px;font-size:12.5px;line-height:12.5px;color:#111;">Report Preview</div>
<div style="left:205px;top:150px;width:241px;height:911px;background:#f0f0f0"></div>
<div style="left:206px;top:153px;width:237px;height:15px;background:#eeeeee;border:1px solid #9a9a9a;border-radius:2px"></div>
<div class="t" style="left:207px;top:155.59px;font-size:12.3px;line-height:12.3px;color:#111;">Element List</div>
<svg style="left:413px;top:155px" width="8" height="11"><path d="M1.5,0.5H6.5V6.5H1.5Z M0,6.5H8 M4,6.5V11" stroke="#222" fill="none" stroke-width="1.2"/><rect x="3" y="1" width="2" height="5" fill="#222"/></svg>
<svg style="left:430px;top:157px" width="9" height="9"><path d="M0.5,0.5L8.5,8.5M8.5,0.5L0.5,8.5" stroke="#222" stroke-width="1.1"/></svg>
<div style="left:206px;top:169px;width:237px;height:25px;background:#fbfbfb"></div>
<div style="left:206px;top:194px;width:237px;height:1px;background:#e4e4e4"></div>
<svg style="left:211px;top:174px" width="18" height="17" viewBox="0 0 18 17"><path d="M8,1.5H17M8,6H17M8,10.5H17" stroke="#888" stroke-width="1.3"/><path d="M8,1V11" stroke="#aaa"/><path d="M4,8V15M0.5,11.5H7.5" stroke="#c8d070" stroke-width="3"/></svg>
<div class="t" style="left:232px;top:176.04px;font-size:12px;line-height:12px;color:#111;">New</div>
<div style="left:260.5px;top:181px;width:0;height:0;border-left:3.5px solid transparent;border-right:3.5px solid transparent;border-top:3.5px solid #222"></div>
<svg style="left:276px;top:175px" width="12" height="12"><path d="M1,1L11,11M11,1L1,11" stroke="#555" stroke-width="1.8"/></svg>
<svg style="left:297px;top:175px" width="16" height="15" viewBox="0 0 16 15"><path d="M0.5,4.5H8.5V14.5H0.5Z" fill="#f4f4f4" stroke="#aaa"/><rect x="2" y="8" width="5" height="4" fill="none" stroke="#bbb"/><path d="M11.5,0.5H15.5V6.5H11.5Z" fill="#f8f8f8" stroke="#aaa"/><path d="M13,8V11H10M11,9.5L10,11L11,12.5" stroke="#7a90b8" fill="none"/></svg>
<svg style="left:321px;top:176px" width="15" height="14" viewBox="0 0 15 14"><path d="M0.5,0.5H14.5L9,6.5V13.5H6V6.5Z" fill="#8ab8f0" stroke="#6a98d8"/><path d="M2,1.5H13" stroke="#c8e0ff"/></svg>
<div class="t" style="left:340px;top:176.04px;font-size:12px;line-height:12px;color:#111;">Filter</div>
<div style="left:368.5px;top:181px;width:0;height:0;border-left:3.5px solid transparent;border-right:3.5px solid transparent;border-top:3.5px solid #222"></div>
<svg style="left:432px;top:177px" width="9" height="7" viewBox="0 0 9 7"><path d="M0.5,0.5L3.5,3.5L0.5,6.5M4.5,0.5L7.5,3.5L4.5,6.5" stroke="#111" fill="none" stroke-width="1.4"/></svg>
<div style="left:419px;top:195px;width:23px;height:24px;background:#f4f4f4"></div>
<div style="left:208px;top:196px;width:212px;height:23px;background:#fff;border:1px solid #8a8a8a"></div>
<div class="t" style="left:210.5px;top:200.86px;font-size:10.8px;line-height:10.8px;color:#777;">Searching element...</div>
<svg style="left:423px;top:199px" width="15" height="15"><circle cx="9" cy="6" r="4.5" stroke="#5a9ad8" stroke-width="2" fill="none"/><path d="M6,9L1.5,13.5" stroke="#5a9ad8" stroke-width="2.5"/></svg>
<div style="left:208px;top:221px;width:235px;height:402px;background:#fff;border:1px solid #a0a0a0"></div>
<div style="left:209px;top:223px;width:26px;height:22px;background:#f2f2f2"></div>
<div style="left:235px;top:223px;width:206px;height:22px;background:linear-gradient(#fde0a6,#f7c065);border-bottom:1px solid #e0a040"></div>
<div class="t" style="left:296px;top:228.54px;font-size:12px;line-height:12px;color:#4a3a20;">Element Name</div>
<div style="left:209px;top:245px;width:26px;height:19px;background:linear-gradient(#fde2b0,#f9cc88)"></div>
<div class="t" style="left:219px;top:248.84px;font-size:12px;line-height:12px;color:#222;">1</div>
<div style="left:235px;top:245px;width:206px;height:19px;background:#dbe8f8;border-bottom:1px solid #c8d8ec"></div>
<div class="t" style="left:256px;top:249.34px;font-size:12px;line-height:12px;color:#111;">RW-1</div>
<div style="left:206px;top:631px;width:237px;height:15px;background:#eeeeee;border:1px solid #9a9a9a;border-radius:2px"></div>
<div class="t" style="left:206px;top:633.09px;font-size:12.3px;line-height:12.3px;color:#111;">Attribute Editor</div>
<svg style="left:413px;top:633px" width="8" height="11"><path d="M1.5,0.5H6.5V6.5H1.5Z M0,6.5H8 M4,6.5V11" stroke="#222" fill="none" stroke-width="1.2"/><rect x="3" y="1" width="2" height="5" fill="#222"/></svg>
<svg style="left:430px;top:634px" width="9" height="9"><path d="M0.5,0.5L8.5,8.5M8.5,0.5L0.5,8.5" stroke="#222" stroke-width="1.1"/></svg>
<div style="left:208px;top:648px;width:235px;height:420px;background:#fff;border:1px solid #a0a0a0"></div>
<div style="left:210px;top:649px;width:117px;height:21px;background:#f4f4f4;border-bottom:1px solid #d8d8d8"></div>
<div class="t" style="left:213px;top:652.83px;font-size:12.6px;line-height:12.6px;color:#111;">Attribute Name</div>
<div style="left:327px;top:649px;width:95px;height:21px;background:linear-gradient(#fde0a6,#f7c065)"></div>
<div class="t" style="left:330.7px;top:652.75px;font-size:12.7px;line-height:12.7px;color:#4a3a20;">Attribute Value</div>
<div style="left:424px;top:649px;width:17px;height:412px;background:#f0f0f0"></div>
<div style="left:426px;top:668px;width:14px;height:235px;background:#cdcdcd"></div>
<svg style="left:428px;top:654px" width="9" height="6"><path d="M0.5,5L4.5,1L8.5,5" stroke="#444" fill="none" stroke-width="1.2"/></svg>
<svg style="left:428px;top:1056px" width="9" height="6"><path d="M0.5,1L4.5,5L8.5,1" stroke="#444" fill="none" stroke-width="1.2"/></svg>
<div style="left:210px;top:670px;width:16px;height:21px;background:#fff"></div>
<div style="left:210px;top:690px;width:213px;height:1px;background:#d8d8d8"></div>
<div class="t" style="left:230px;top:674.84px;font-size:12px;line-height:12px;color:#1c2496;">Name</div>
<div style="left:327px;top:670px;width:95px;height:20px;background:#d8e8f8"></div>
<div class="t" style="left:330px;top:674.84px;font-size:12px;line-height:12px;color:#111;">RW-1</div>
<div style="left:210px;top:691px;width:16px;height:21px;background:#fff"></div>
<div style="left:210px;top:711px;width:213px;height:1px;background:#d8d8d8"></div>
<div class="t" style="left:230px;top:695.84px;font-size:12px;line-height:12px;color:#1c2496;">Category</div>
<div class="t" style="left:330px;top:695.84px;font-size:12px;line-height:12px;color:#111;">Common</div>
<div style="left:210px;top:712px;width:16px;height:21px;background:#fff"></div>
<div style="left:210px;top:732px;width:213px;height:1px;background:#d8d8d8"></div>
<div class="t" style="left:230px;top:716.84px;font-size:12px;line-height:12px;color:#1c2496;">Material</div>
<div class="t" style="left:330px;top:716.84px;font-size:12px;line-height:12px;color:#111;">Metal</div>
<div style="left:210px;top:733px;width:16px;height:20px;background:#fff"></div>
<div style="left:210px;top:752px;width:213px;height:1px;background:#d8d8d8"></div>
<div class="t" style="left:230px;top:737.34px;font-size:12px;line-height:12px;color:#1c2496;">Frame Thickness(</div>
<div class="t" style="left:330px;top:737.34px;font-size:12px;line-height:12px;color:#111;">60</div>
<div style="left:210px;top:753px;width:16px;height:21px;background:#fff"></div>
<div style="left:210px;top:773px;width:213px;height:1px;background:#d8d8d8"></div>
<div class="t" style="left:230px;top:757.84px;font-size:12px;line-height:12px;color:#111;">Start Top</div>
<div class="t" style="left:330px;top:757.84px;font-size:12px;line-height:12px;color:#111;">Floor_Bottom_</div>
<div style="left:210px;top:774px;width:16px;height:21px;background:#fff"></div>
<div style="left:210px;top:794px;width:213px;height:1px;background:#d8d8d8"></div>
<div class="t" style="left:230px;top:778.84px;font-size:12px;line-height:12px;color:#111;">End Top</div>
<div class="t" style="left:330px;top:778.84px;font-size:12px;line-height:12px;color:#111;">Floor_Bottom_</div>
<div style="left:210px;top:795px;width:16px;height:21px;background:#fff"></div>
<div style="left:210px;top:815px;width:213px;height:1px;background:#d8d8d8"></div>
<div class="t" style="left:230px;top:799.84px;font-size:12px;line-height:12px;color:#111;">Start Bottom</div>
<div class="t" style="left:330px;top:799.84px;font-size:12px;line-height:12px;color:#111;">Floor_Bottom_</div>
<div style="left:210px;top:816px;width:16px;height:21px;background:#fff"></div>
<div style="left:210px;top:836px;width:213px;height:1px;background:#d8d8d8"></div>
<div class="t" style="left:230px;top:820.84px;font-size:12px;line-height:12px;color:#111;">End Bottom</div>
<div class="t" style="left:330px;top:820.84px;font-size:12px;line-height:12px;color:#111;">Floor_Bottom_</div>
<div style="left:210px;top:837px;width:16px;height:21px;background:#fff"></div>
<div style="left:210px;top:857px;width:213px;height:1px;background:#d8d8d8"></div>
<div class="t" style="left:230px;top:841.84px;font-size:12px;line-height:12px;color:#111;">Axis from Left</div>
<div class="t" style="left:330px;top:841.84px;font-size:12px;line-height:12px;color:#111;">(30)</div>
<div style="left:210px;top:858px;width:16px;height:21px;background:#fff"></div>
<div style="left:210px;top:878px;width:213px;height:1px;background:#d8d8d8"></div>
<div class="t" style="left:230px;top:862.84px;font-size:12px;line-height:12px;color:#1c2496;">Horizontal gap</div>
<div class="t" style="left:330px;top:862.84px;font-size:12px;line-height:12px;color:#111;">0</div>
<div style="left:210px;top:879px;width:16px;height:21px;background:#fff"></div>
<div style="left:210px;top:899px;width:213px;height:1px;background:#d8d8d8"></div>
<div class="t" style="left:230px;top:883.84px;font-size:12px;line-height:12px;color:#1c2496;">Vertical gap</div>
<div class="t" style="left:330px;top:883.84px;font-size:12px;line-height:12px;color:#111;">0</div>
<div style="left:210px;top:900px;width:16px;height:22px;background:#fff"></div>
<div style="left:210px;top:921px;width:213px;height:1px;background:#d8d8d8"></div>
<div class="t" style="left:230px;top:905.34px;font-size:12px;line-height:12px;color:#111;">Summary Info.</div>
<div style="left:210px;top:922px;width:16px;height:20px;background:#fff"></div>
<div style="left:210px;top:941px;width:213px;height:1px;background:#d8d8d8"></div>
<div class="t" style="left:230px;top:926.34px;font-size:12px;line-height:12px;color:#1c2496;">Remarks</div>
<div style="left:210px;top:942px;width:16px;height:22px;background:#fff"></div>
<div style="left:210px;top:963px;width:213px;height:1px;background:#d8d8d8"></div>
<div class="t" style="left:230px;top:947.34px;font-size:12px;line-height:12px;color:#111;">Construction Info</div>
<div style="left:210px;top:964px;width:16px;height:21px;background:#fff"></div>
<div style="left:210px;top:984px;width:213px;height:1px;background:#d8d8d8"></div>
<div class="t" style="left:240px;top:968.84px;font-size:12px;line-height:12px;color:#111;">Construction</div>
<div style="left:217px;top:964px;width:1px;height:21px;background:#c8c8c8"></div>
<div style="left:218px;top:974px;width:14px;height:1px;background:#c8c8c8"></div>
<div style="left:210px;top:985px;width:16px;height:20px;background:#fff"></div>
<div style="left:210px;top:1004px;width:213px;height:1px;background:#d8d8d8"></div>
<div class="t" style="left:240px;top:989.34px;font-size:12px;line-height:12px;color:#111;">Flow Zone</div>
<div style="left:217px;top:985px;width:1px;height:20px;background:#c8c8c8"></div>
<div style="left:218px;top:995px;width:14px;height:1px;background:#c8c8c8"></div>
<div style="left:210px;top:1005px;width:16px;height:21px;background:#fff"></div>
<div style="left:210px;top:1025px;width:213px;height:1px;background:#d8d8d8"></div>
<div class="t" style="left:240px;top:1009.84px;font-size:12px;line-height:12px;color:#111;">Subcontractor</div>
<div style="left:217px;top:1005px;width:1px;height:21px;background:#c8c8c8"></div>
<div style="left:218px;top:1015px;width:14px;height:1px;background:#c8c8c8"></div>
<div style="left:210px;top:1026px;width:16px;height:22px;background:#fff"></div>
<div style="left:210px;top:1047px;width:213px;height:1px;background:#d8d8d8"></div>
<div class="t" style="left:240px;top:1031.34px;font-size:12px;line-height:12px;color:#111;">Working Team</div>
<div style="left:217px;top:1026px;width:1px;height:22px;background:#c8c8c8"></div>
<div style="left:218px;top:1036px;width:14px;height:1px;background:#c8c8c8"></div>
<div style="left:210px;top:1048px;width:16px;height:20px;background:#fff"></div>
<div style="left:210px;top:1067px;width:213px;height:1px;background:#d8d8d8"></div>
<div class="t" style="left:240px;top:1052.34px;font-size:12px;line-height:12px;color:#111;">Scheduled</div>
<div style="left:217px;top:1048px;width:1px;height:20px;background:#c8c8c8"></div>
<div style="left:218px;top:1058px;width:14px;height:1px;background:#c8c8c8"></div>
<div style="left:327px;top:670px;width:1px;height:398px;background:#d8d8d8"></div>
<div style="left:212px;top:948px;width:11px;height:11px;border:1px solid #a0a0a0;background:#fff"></div>
<div style="left:215px;top:953px;width:5px;height:1px;background:#333"></div>
<div style="left:422px;top:670px;width:1px;height:398px;background:#d8d8d8"></div>
<div style="left:209px;top:1068px;width:232px;height:13px;background:#f0f0f0"></div>
<div style="left:227px;top:1069px;width:58px;height:11px;background:#cdcdcd"></div>
<svg style="left:215px;top:1071px" width="6" height="9"><path d="M5,0.5L1,4.5L5,8.5" stroke="#444" fill="none" stroke-width="1.2"/></svg>
<svg style="left:414px;top:1071px" width="6" height="9"><path d="M1,0.5L5,4.5L1,8.5" stroke="#444" fill="none" stroke-width="1.2"/></svg>
<div style="left:446px;top:150px;width:1190px;height:56px;background:#f0f0f0"></div>
<div style="left:446px;top:151px;width:529px;height:27px;background:#f5f5f5"></div>
<div style="left:448px;top:153px;width:2px;height:22px;background:repeating-linear-gradient(#b0b0b0 0 1px,transparent 1px 3px)"></div>
<div style="left:456px;top:155.5px;width:57px;height:19.5px;background:#fff"></div>
<div style="left:500px;top:155.5px;width:13px;height:19.5px;background:#e6e6e6;border:1px solid #b8b8b8"></div>
<svg style="left:502px;top:162.25px" width="9" height="6"><path d="M0.5,0.5L4.5,5L8.5,0.5" stroke="#444" fill="none"/></svg>
<div class="t" style="left:459px;top:159.44px;width:41px;overflow:hidden;font-size:12px;line-height:12px;color:#111">Grounc</div>
<div style="left:516px;top:155.5px;width:69px;height:19.5px;background:#fff"></div>
<div style="left:572px;top:155.5px;width:13px;height:19.5px;background:#e6e6e6;border:1px solid #b8b8b8"></div>
<svg style="left:574px;top:162.25px" width="9" height="6"><path d="M0.5,0.5L4.5,5L8.5,0.5" stroke="#444" fill="none"/></svg>
<div class="t" style="left:519px;top:159.44px;width:53px;overflow:hidden;font-size:12px;line-height:12px;color:#111">Door &amp; W</div>
<div style="left:588px;top:155.5px;width:68px;height:19.5px;background:#fff"></div>
<div style="left:643px;top:155.5px;width:13px;height:19.5px;background:#e6e6e6;border:1px solid #b8b8b8"></div>
<svg style="left:645px;top:162.25px" width="9" height="6"><path d="M0.5,0.5L4.5,5L8.5,0.5" stroke="#444" fill="none"/></svg>
<div class="t" style="left:591px;top:159.44px;width:52px;overflow:hidden;font-size:12px;line-height:12px;color:#111">Ribbon W</div>
<div style="left:660px;top:155.5px;width:69px;height:19.5px;background:#fff"></div>
<div style="left:716px;top:155.5px;width:13px;height:19.5px;background:#e6e6e6;border:1px solid #b8b8b8"></div>
<svg style="left:718px;top:162.25px" width="9" height="6"><path d="M0.5,0.5L4.5,5L8.5,0.5" stroke="#444" fill="none"/></svg>
<div class="t" style="left:663px;top:159.44px;width:53px;overflow:hidden;font-size:12px;line-height:12px;color:#111">RW-1</div>
<div style="left:731.5px;top:155.5px;width:72.5px;height:19.5px;background:#fff"></div>
<div style="left:791px;top:155.5px;width:13px;height:19.5px;background:#e6e6e6;border:1px solid #b8b8b8"></div>
<svg style="left:793px;top:162.25px" width="9" height="6"><path d="M0.5,0.5L4.5,5L8.5,0.5" stroke="#444" fill="none"/></svg>
<div class="t" style="left:734.5px;top:159.44px;width:56.5px;overflow:hidden;font-size:12px;line-height:12px;color:#111">Layer 1</div>
<div style="left:809px;top:156px;width:1px;height:18px;background:#c0c0c0"></div>
<div style="left:812px;top:154px;width:108px;height:21px;background:#cde4f7;border:1px solid #98c6ec"></div>
<div style="left:818px;top:158px;width:15px;height:13px;background:linear-gradient(#f8e0a0,#d8a040);border:1px solid #a07830;border-radius:1px"></div>
<div class="t" style="left:836px;top:159.27px;font-size:12.2px;line-height:12.2px;color:#111;">Attribute Editor</div>
<svg style="left:969px;top:157px" width="9" height="7" viewBox="0 0 9 7"><path d="M0.5,0.5L3.5,3.5L0.5,6.5M4.5,0.5L7.5,3.5L4.5,6.5" stroke="#111" fill="none" stroke-width="1.4"/></svg>
<div style="left:446px;top:178px;width:529px;height:28px;background:#f5f5f5"></div>
<svg style="left:459px;top:184px" width="12" height="15"><path d="M1,1V12L4,9L6.5,14L8.5,13L6,8H10Z" fill="#fff" stroke="#999"/></svg>
<div style="left:477.5px;top:189px;width:0;height:0;border-left:3.5px solid transparent;border-right:3.5px solid transparent;border-top:3.5px solid #222"></div>
<div style="left:486px;top:181px;width:1px;height:20px;background:#c0c0c0"></div>
<div style="left:491px;top:181px;width:22.5px;height:21px;background:#cde4f7;border:1px solid #98c6ec"></div>
<svg style="left:495px;top:185px" width="15" height="14"><path d="M1,1L12,12M12,6V12H6" stroke="#1a3a80" fill="none" stroke-width="1.5"/></svg>
<svg style="left:517px;top:183px" width="16" height="16"><circle cx="8" cy="9" r="6" stroke="#5a80c0" fill="none" stroke-width="1.3"/><path d="M8,6V12M5,9H11" stroke="#5a80c0"/></svg>
<svg style="left:541px;top:184px" width="14" height="14"><path d="M1,13C2,6 6,2 12,1" stroke="#888" fill="none" stroke-width="1.5"/></svg>
<div style="left:559.5px;top:189px;width:0;height:0;border-left:3.5px solid transparent;border-right:3.5px solid transparent;border-top:3.5px solid #222"></div>
<div style="left:568px;top:182px;width:54px;height:19px;background:#fff"></div>
<div style="left:609px;top:182px;width:13px;height:19px;background:#e6e6e6;border:1px solid #b8b8b8"></div>
<svg style="left:611px;top:188.5px" width="9" height="6"><path d="M0.5,0.5L4.5,5L8.5,0.5" stroke="#444" fill="none"/></svg>
<div style="left:628px;top:186px;width:16px;height:11px;background:linear-gradient(#e0ecfa,#a8c4ea);border:1px solid #6a90c8"></div>
<div style="left:649px;top:181px;width:1px;height:20px;background:#c0c0c0"></div>
<div style="left:656px;top:184px;width:14px;height:14px;border:1px dashed #555"></div>
<div class="t" style="left:674.7px;top:186.16px;font-size:12.1px;line-height:12.1px;color:#111;">Auto Layout</div>
<div style="left:742px;top:191px;width:0;height:0;border-left:3px solid transparent;border-right:3px solid transparent;border-top:3px solid #222"></div>
<div style="left:754px;top:181px;width:1px;height:20px;background:#c0c0c0"></div>
<svg style="left:762px;top:183px" width="16" height="15"><path d="M2,1V14H15M5,4H14M5,8H14M5,11H14" stroke="#555" fill="none"/></svg>
<div class="t" style="left:781px;top:186.75px;font-size:11.4px;line-height:11.4px;color:#111;">Layer Setting</div>
<div style="left:851px;top:191px;width:0;height:0;border-left:3px solid transparent;border-right:3px solid transparent;border-top:3px solid #222"></div>
<div style="left:985px;top:153px;width:2px;height:22px;background:repeating-linear-gradient(#b0b0b0 0 1px,transparent 1px 3px)"></div>
<svg style="left:992px;top:158px" width="15" height="15"><path d="M4,1V14M10,1V14M1,4H14M1,10H14" stroke="#666" fill="none"/></svg>
<div class="t" style="left:1013px;top:159.95px;font-size:11.4px;line-height:11.4px;color:#111;">Parallel</div>
<svg style="left:1059px;top:157px" width="15" height="16"><path d="M1,2H14M1,1V5M14,1V5M5,6L12,14" stroke="#888" fill="none"/></svg>
<div class="t" style="left:1078px;top:159.44px;font-size:12px;line-height:12px;color:#111;">Dimension</div>
<div style="left:1139px;top:163px;width:0;height:0;border-left:3px solid transparent;border-right:3px solid transparent;border-top:3px solid #222"></div>
<svg style="left:1150px;top:157px" width="15" height="16"><path d="M1,13L14,2M3,1V15M1,12H15" stroke="#666" fill="none"/></svg>
<div class="t" style="left:1169px;top:159.61px;font-size:11.8px;line-height:11.8px;color:#111;">Two Points</div>
<svg style="left:1235px;top:157px" width="15" height="16"><path d="M1,13L14,2M3,1V15M1,12H15" stroke="#c05050" fill="none"/></svg>
<div class="t" style="left:1254px;top:159.44px;font-size:12px;line-height:12px;color:#111;">Point Angle</div>
<div style="left:1321px;top:163px;width:0;height:0;border-left:3px solid transparent;border-right:3px solid transparent;border-top:3px solid #222"></div>
<svg style="left:1386px;top:157px" width="9" height="7" viewBox="0 0 9 7"><path d="M0.5,0.5L3.5,3.5L0.5,6.5M4.5,0.5L7.5,3.5L4.5,6.5" stroke="#111" fill="none" stroke-width="1.4"/></svg>
<div style="left:1400px;top:153px;width:2px;height:22px;background:repeating-linear-gradient(#b0b0b0 0 1px,transparent 1px 3px)"></div>
<svg style="left:1409px;top:156px" width="18" height="17"><path d="M1,2V16M17,2V16M1,6H17" stroke="#333" fill="none" stroke-width="1.2"/></svg>
<div class="t" style="left:1430px;top:159.87px;font-size:11.5px;line-height:11.5px;color:#111;">Measure Distance</div>
<svg style="left:1623px;top:157px" width="9" height="7" viewBox="0 0 9 7"><path d="M0.5,0.5L3.5,3.5L0.5,6.5M4.5,0.5L7.5,3.5L4.5,6.5" stroke="#111" fill="none" stroke-width="1.4"/></svg>
<div style="left:446px;top:206px;width:29px;height:855px;background:#f0f0f0"></div>
<div style="left:447px;top:206px;width:27px;height:689px;background:#f5f5f5;border-right:1px solid #e0e0e0"></div>
<div style="left:452px;top:208px;width:18px;height:2px;background:repeating-linear-gradient(90deg,#b0b0b0 0 1px,transparent 1px 3px)"></div>
<div style="left:451px;top:238px;width:18px;height:1px;background:#a8a8a8"></div>
<div style="left:451px;top:288px;width:18px;height:1px;background:#a8a8a8"></div>
<div style="left:451px;top:339px;width:18px;height:1px;background:#a8a8a8"></div>
<div style="left:451px;top:455px;width:18px;height:1px;background:#a8a8a8"></div>
<div style="left:451px;top:633px;width:18px;height:1px;background:#a8a8a8"></div>
<div style="left:451px;top:822px;width:18px;height:1px;background:#a8a8a8"></div>
<svg style="left:453px;top:215px" width="17" height="16" viewBox="0 0 17 16"><path d="M2,14H15" stroke="#444" stroke-width="1.5"/><path d="M5,12L14,2L16,4L7,13Z" fill="#e8e8e8" stroke="#666"/><path d="M4,13L6,10" stroke="#333" stroke-width="2"/></svg>
<svg style="left:453px;top:245px" width="17" height="15" viewBox="0 0 17 15"><circle cx="4" cy="5" r="3.2" fill="none" stroke="#777"/><path d="M10,2L14,6M14,3V6H11" stroke="#555" fill="none"/><circle cx="12" cy="11" r="3.5" fill="none" stroke="#777"/><circle cx="12" cy="11" r="2" fill="none" stroke="#777"/></svg>
<svg style="left:454px;top:267px" width="16" height="15" viewBox="0 0 16 15"><path d="M7,1L1,14H7Z" fill="none" stroke="#7a7aa0" stroke-width="1.2"/><path d="M9,1L15,14H9Z" fill="none" stroke="#7a7aa0" stroke-width="1.2"/></svg>
<svg style="left:454px;top:295px" width="14" height="14" viewBox="0 0 14 14"><path d="M7,0.5V13.5M0.5,7H13.5" stroke="#777" stroke-width="1.5"/><path d="M7,0L4.5,3H9.5ZM7,14L4.5,11H9.5ZM0,7L3,4.5V9.5ZM14,7L11,4.5V9.5Z" fill="#777"/></svg>
<svg style="left:455px;top:317px" width="12" height="13" viewBox="0 0 12 13"><circle cx="6" cy="7" r="5" fill="none" stroke="#5a90d8" stroke-width="2.5"/><path d="M6,0V5L9,2.5Z" fill="#4a80c8"/></svg>
<svg style="left:455px;top:344px" width="14" height="18" viewBox="0 0 14 18"><path d="M1,12V17M4,12V17M1,14H4" stroke="#5a6aa0" stroke-width="1.3"/><path d="M6,11V17M8,11V17" stroke="#999" stroke-dasharray="1,1"/><path d="M11,1V17M13,1V17" stroke="#888"/></svg>
<svg style="left:453px;top:407px" width="15" height="13" viewBox="0 0 15 13"><path d="M1,5H15M1,8H15" stroke="#888"/><path d="M5,1V13M8,1V13" stroke="#777"/><path d="M11,2V12" stroke="#999" stroke-dasharray="1,1"/></svg>
<svg style="left:453px;top:463px" width="16" height="13" viewBox="0 0 16 13"><path d="M1,3L6,3M1,3L3,1M1,3L3,5M15,3L10,3M15,3L13,1M15,3L13,5" stroke="#7a8ab0" fill="none"/><rect x="3.5" y="7.5" width="3" height="5" fill="none" stroke="#777"/><rect x="9.5" y="7.5" width="3" height="5" fill="none" stroke="#777"/></svg>
<svg style="left:453px;top:524px" width="16" height="14" viewBox="0 0 16 14"><path d="M1,3L6,3M6,3L4,1M6,3L4,5M15,3L10,3M10,3L12,1M10,3L12,5" stroke="#7a8ab0" fill="none"/><rect x="3.5" y="7.5" width="3" height="5" fill="none" stroke="#777"/><rect x="9.5" y="7.5" width="3" height="5" fill="none" stroke="#777"/></svg>
<svg style="left:453px;top:589px" width="16" height="13" viewBox="0 0 16 13"><path d="M2,12L14,1M4,12V5M8,12V5" stroke="#c8c8c8"/></svg>
<svg style="left:454px;top:641px" width="14" height="15" viewBox="0 0 14 15"><rect x="2.5" y="5.5" width="10" height="9" fill="#b0b8e8" stroke="#4050a0"/><path d="M1,1V15" stroke="#4050a0"/><path d="M6,3H12M8,1L6,3L8,5" stroke="#4050a0" fill="none"/></svg>
<svg style="left:453px;top:705px" width="15" height="13" viewBox="0 0 15 13"><path d="M3,12C0,12 0,7 3,7C3,2 11,2 11,6C15,6 15,12 11,12Z" fill="#f4e4e4" stroke="#b07070"/><path d="M5,10C5,6 9,6 9,10" fill="none" stroke="#b07070"/></svg>
<svg style="left:453px;top:760px" width="16" height="15" viewBox="0 0 16 15"><path d="M0.5,3.5H9.5M0.5,3.5V14.5H14.5V8" stroke="#777" fill="none"/><path d="M9.5,3.5L14.5,8" stroke="#888" stroke-dasharray="1.5,1" fill="none"/><path d="M12,1V4" stroke="#999" stroke-dasharray="1,1"/></svg>
<svg style="left:455px;top:830px" width="13" height="16" viewBox="0 0 13 16"><path d="M3,10L11,1L13,3L5,11Z" fill="#e4e4e4" stroke="#c0c0c0"/><path d="M3,12V16M1,14H5" stroke="#c8c8c8"/></svg>
<div class="t" style="left:453.5px;top:364px;width:12px;font-size:12px;line-height:12px;color:#111;writing-mode:vertical-rl">Extend</div>
<div class="t" style="left:453.5px;top:424px;width:12px;font-size:12px;line-height:12px;color:#111;writing-mode:vertical-rl">Trim</div>
<div class="t" style="left:453.5px;top:479px;width:12px;font-size:12px;line-height:12px;color:#111;writing-mode:vertical-rl">Break▾</div>
<div class="t" style="left:453.5px;top:544px;width:12px;font-size:12px;line-height:12px;color:#111;writing-mode:vertical-rl">Merge</div>
<div class="t" style="left:453.5px;top:604px;width:12px;font-size:12px;line-height:12px;color:#aaa;writing-mode:vertical-rl">Split</div>
<div class="t" style="left:453.5px;top:658px;width:12px;font-size:12px;line-height:12px;color:#111;writing-mode:vertical-rl">Align▾</div>
<div class="t" style="left:453.5px;top:722px;width:12px;font-size:12px;line-height:12px;color:#111;writing-mode:vertical-rl">Offset</div>
<div class="t" style="left:453.5px;top:778px;width:12px;font-size:12px;line-height:12px;color:#111;writing-mode:vertical-rl">Stretch</div>
<div class="t" style="left:453.5px;top:846px;width:12px;font-size:12px;line-height:12px;color:#aaa;writing-mode:vertical-rl">Set Grip</div>
<div style="left:446px;top:1061px;width:1190px;height:19px;background:#f0f0f0"></div>
<div style="left:449px;top:1064px;width:2px;height:16px;background:repeating-linear-gradient(#b0b0b0 0 1px,transparent 1px 3px)"></div>
<div style="left:457px;top:1065px;width:56px;height:15px;background:#fff"></div>
<div class="t" style="left:459px;top:1066.84px;font-size:12px;line-height:12px;color:#777;">Not off</div>
<div style="left:500px;top:1065px;width:13px;height:15px;background:#d8d8d8"></div>
<div style="left:518px;top:1065px;width:1px;height:15px;background:#999"></div>
<div class="t" style="left:521px;top:1067.84px;font-size:12px;line-height:12px;color:#777;">X =</div>
<div style="left:546px;top:1065px;width:62px;height:15px;background:#f8f8f8"></div>
<div class="t" style="left:597px;top:1066.84px;font-size:12px;line-height:12px;color:#555;">0</div>
<div class="t" style="left:623.7px;top:1067.84px;font-size:12px;line-height:12px;color:#555;">mm Y =</div>
<div style="left:670px;top:1065px;width:60px;height:15px;background:#f8f8f8"></div>
<div class="t" style="left:721px;top:1066.84px;font-size:12px;line-height:12px;color:#555;">0</div>
<div class="t" style="left:748px;top:1067.84px;font-size:12px;line-height:12px;color:#555;">mm</div>
<div style="left:774px;top:1065px;width:1px;height:15px;background:#999"></div>
<div style="left:778px;top:1068px;width:12px;height:12px;background:#fff;border:1px solid #999"></div>
<div class="t" style="left:799px;top:1067.84px;font-size:12px;line-height:12px;color:#aaa;">Rota</div>
<div class="t" style="left:848px;top:1066.84px;font-size:12px;line-height:12px;color:#555;">0.000</div>
<div style="left:902px;top:1062px;width:21px;height:18px;background:#e8e8e8"></div>
<div style="left:926px;top:1064px;width:2px;height:16px;background:repeating-linear-gradient(#b0b0b0 0 1px,transparent 1px 3px)"></div>
<div style="left:1042px;top:1063px;width:43px;height:17px;background:#cde4f7;border:1px solid #a8d0f0"></div>
<div style="left:1086px;top:1063px;width:47px;height:17px;background:#cde4f7;border:1px solid #a8d0f0"></div>
<div style="left:1134px;top:1063px;width:56px;height:17px;background:#cde4f7;border:1px solid #a8d0f0"></div>
<div style="left:1257px;top:1063px;width:48px;height:17px;background:#cde4f7;border:1px solid #a8d0f0"></div>
<div class="t" style="left:954.7px;top:1068.34px;font-size:12px;line-height:12px;color:#111;">Ortho</div>
<div class="t" style="left:1012px;top:1068.34px;font-size:12px;line-height:12px;color:#111;">Intes</div>
<div class="t" style="left:1065px;top:1068.34px;font-size:12px;line-height:12px;color:#111;">Per</div>
<div class="t" style="left:1109px;top:1068.34px;font-size:12px;line-height:12px;color:#111;">Mid</div>
<div class="t" style="left:1157px;top:1068.34px;font-size:12px;line-height:12px;color:#111;">Vertex</div>
<div class="t" style="left:1214.6px;top:1068.34px;font-size:12px;line-height:12px;color:#111;">Coord</div>
<div class="t" style="left:1281px;top:1068.34px;font-size:12px;line-height:12px;color:#111;">Axis</div>
<div class="t" style="left:1328px;top:1068.34px;font-size:12px;line-height:12px;color:#111;">At Will</div>
<div style="left:1253px;top:1065px;width:1px;height:15px;background:#999"></div>
<svg style="left:934px;top:1064px" width="16" height="16" viewBox="0 0 16 16"><path d="M2,16V2H15" stroke="#e0b8b8" stroke-width="2" fill="none"/><circle cx="9" cy="10" r="3" fill="none" stroke="#c8c8c8"/><path d="M11,12L14,15" stroke="#c8c8c8"/></svg>
<svg style="left:993px;top:1066px" width="14" height="14" viewBox="0 0 14 14"><path d="M1,1L13,13M13,1L1,13" stroke="#8090b0" stroke-width="1.1"/><rect x="5" y="5" width="4" height="4" fill="#4a6090"/></svg>
<svg style="left:1045px;top:1066px" width="16" height="14" viewBox="0 0 16 14"><path d="M1,13H15M9,1V13" stroke="#3060b0" stroke-width="1.5"/><rect x="7" y="11" width="4" height="3" fill="#2050a0"/></svg>
<svg style="left:1089px;top:1068px" width="15" height="10" viewBox="0 0 15 10"><path d="M0,5H15" stroke="#5070a8" stroke-width="1.2"/><rect x="5.5" y="3" width="4" height="4" fill="#2a4a90"/></svg>
<svg style="left:1137px;top:1065px" width="15" height="14" viewBox="0 0 15 14"><path d="M7.5,1L14,6L11.5,13H3.5L1,6Z" fill="none" stroke="#3a5a98" stroke-width="1.2"/></svg>
<svg style="left:1192px;top:1064px" width="16" height="16" viewBox="0 0 16 16"><path d="M3,16V4M3,4L1,6M3,4L5,6M3,14H15" stroke="#9a9a9a" stroke-dasharray="1.5,1" fill="none"/><path d="M8,3L13,8M13,3L8,8" stroke="#9a9a9a"/></svg>
<svg style="left:1265px;top:1066px" width="13" height="13" viewBox="0 0 13 13"><circle cx="2.5" cy="10.5" r="1.8" fill="#2a60b0"/><circle cx="10.5" cy="2.5" r="1.8" fill="#2a60b0"/><path d="M3,10L10,3" stroke="#5a80c0" stroke-dasharray="1,1"/></svg>
<svg style="left:1307px;top:1064px" width="16" height="16" viewBox="0 0 16 16"><path d="M2,14L7,3L14,14" stroke="#777" fill="none"/><rect x="5" y="1" width="4" height="4" fill="#fff" stroke="#555"/><rect x="0.5" y="12" width="3.5" height="3.5" fill="#fff" stroke="#555"/><rect x="12" y="12" width="3.5" height="3.5" fill="#fff" stroke="#555"/></svg>
<div style="left:1364px;top:1061px;width:272px;height:19px;background:#f0f0f0"></div>
<div style="left:1636px;top:150px;width:284px;height:930px;background:#f0f0f0"></div>
<div style="left:1639px;top:153px;width:279px;height:15px;background:#eeeeee;border:1px solid #9a9a9a;border-radius:2px"></div>
<div class="t" style="left:1639px;top:155.25px;font-size:12.7px;line-height:12.7px;color:#111;">Drawing Management</div>
<svg style="left:1888px;top:155px" width="8" height="11"><path d="M1.5,0.5H6.5V6.5H1.5Z M0,6.5H8 M4,6.5V11" stroke="#222" fill="none" stroke-width="1.2"/><rect x="3" y="1" width="2" height="5" fill="#222"/></svg>
<svg style="left:1905px;top:157px" width="9" height="9"><path d="M0.5,0.5L8.5,8.5M8.5,0.5L0.5,8.5" stroke="#222" stroke-width="1.1"/></svg>
<div style="left:1641px;top:170px;width:91px;height:20px;background:#f8f8f8;border-top:1px solid #e0e0e0;border-right:1px solid #e0e0e0"></div>
<div class="t" style="left:1646.6px;top:173.70px;font-size:10.4px;line-height:10.4px;color:#111;">Drawing File List</div>
<div style="left:1641px;top:190px;width:277px;height:585px;background:#f4f4f4;border:1px solid #e4e4e4"></div>
<div style="left:1644px;top:194px;width:270px;height:21px;background:#eaeaea"></div>
<div style="left:1644px;top:194.5px;width:77px;height:19.5px;background:linear-gradient(#f6f6f6,#e6e6e6);border:1px solid #b8b8b8"></div>
<div style="left:1721px;top:194.5px;width:9px;height:19.5px;background:linear-gradient(#f6f6f6,#e6e6e6);border:1px solid #b8b8b8"></div>
<div style="left:1730px;top:194.5px;width:79px;height:19.5px;background:linear-gradient(#f6f6f6,#e6e6e6);border:1px solid #b8b8b8"></div>
<div style="left:1811px;top:194.5px;width:89px;height:19.5px;background:linear-gradient(#f6f6f6,#e6e6e6);border:1px solid #b8b8b8"></div>
<div style="left:1903px;top:194.5px;width:11px;height:19.5px;background:linear-gradient(#f6f6f6,#e6e6e6);border:1px solid #b8b8b8"></div>
<div style="left:1722px;top:202px;width:0;height:0;border-left:3.5px solid transparent;border-right:3.5px solid transparent;border-top:3.5px solid #333"></div>
<div class="t" style="left:1649.6px;top:199.23px;font-size:11.9px;line-height:11.9px;color:#111;">Add Drawing</div>
<div class="t" style="left:1735.7px;top:199.40px;font-size:11.7px;line-height:11.7px;color:#111;">Split Drawing</div>
<div class="t" style="left:1815.5px;top:199.48px;font-size:11.6px;line-height:11.6px;color:#111;">Delete Drawing</div>
<svg style="left:1904px;top:198px" width="9" height="7" viewBox="0 0 9 7"><path d="M0.5,0.5L3.5,3.5L0.5,6.5M4.5,0.5L7.5,3.5L4.5,6.5" stroke="#111" fill="none" stroke-width="1.4"/></svg>
<div style="left:1644px;top:219px;width:270px;height:547px;background:#fff;border:1px solid #a8a8a8"></div>
<div style="left:1645px;top:221px;width:21px;height:26px;background:#f4f4f4"></div>
<div style="left:1666px;top:221px;width:86px;height:26px;background:linear-gradient(#fde0a6,#f7c065)"></div>
<div style="left:1752px;top:221px;width:160px;height:26px;background:#f6f6f6"></div>
<div style="left:1838px;top:221px;width:1px;height:26px;background:#dcdcdc"></div>
<div style="left:1645px;top:246px;width:267px;height:1px;background:#dcdcdc"></div>
<div class="t" style="left:1694.7px;top:229.10px;font-size:11.1px;line-height:11.1px;color:#5a3a18;">Name</div>
<div class="t" style="left:1782px;top:228.34px;font-size:12px;line-height:12px;color:#222;">Scale</div>
<div class="t" style="left:1866px;top:228.34px;font-size:12px;line-height:12px;color:#222;">Date</div>
<div style="left:1645px;top:265px;width:267px;height:1px;background:#e4e4e4"></div>
<div class="t" style="left:1651px;top:250.84px;font-size:12px;line-height:12px;color:#222;">1</div>
<div style="left:1669.5px;top:250px;width:12px;height:13px;background:#fff;border:1px solid #bbb"></div>
<div style="left:1672px;top:256px;width:7px;height:1px;background:#222"></div>
<div class="t" style="left:1687.4px;top:250.84px;font-size:12px;line-height:12px;color:#111;">01.</div>
<div style="left:1752px;top:247px;width:1px;height:19px;background:#e4e4e4"></div>
<div style="left:1838px;top:247px;width:1px;height:19px;background:#e4e4e4"></div>
<div class="t" style="left:1755px;top:250.84px;font-size:12px;line-height:12px;color:#111;">1:1</div>
<div class="t" style="left:1841.5px;top:250.42px;font-size:12.5px;line-height:12.5px;color:#111;">2018-11-12</div>
<div style="left:1646px;top:266px;width:20px;height:18px;background:linear-gradient(#fde2b0,#f9cc88)"></div>
<div class="t" style="left:1651px;top:268.84px;font-size:12px;line-height:12px;color:#222;">2</div>
<div style="left:1666px;top:266px;width:246px;height:18px;background:#007a10"></div>
<div style="left:1665px;top:265px;width:88px;height:20px;border:2px solid #687868"></div>
<div style="left:1752px;top:266px;width:1px;height:18px;background:#40b040"></div>
<div style="left:1838px;top:266px;width:1px;height:18px;background:#40b040"></div>
<div style="left:1675px;top:267px;width:1px;height:9px;background:#a0e8a0"></div>
<div style="left:1675px;top:275px;width:12px;height:1px;background:#a0e8a0"></div>
<div class="t" style="left:1697.5px;top:269.43px;font-size:11.3px;line-height:11.3px;color:#0a3a0a;">GROUND</div>
<div class="t" style="left:1755px;top:268.84px;font-size:12px;line-height:12px;color:#0a3a0a;">1:1</div>
<div class="t" style="left:1841.5px;top:268.42px;font-size:12.5px;line-height:12.5px;color:#0a3a0a;">2018-11-12</div>
<div style="left:1751px;top:283px;width:5px;height:5px;background:#777"></div>
<div style="left:1645px;top:747px;width:267px;height:15px;background:#f0f0f0"></div>
<div style="left:1663px;top:747px;width:58px;height:15px;background:#cdcdcd"></div>
<svg style="left:1652px;top:751px" width="6" height="9"><path d="M5,0.5L1,4.5L5,8.5" stroke="#333" fill="none" stroke-width="1.4"/></svg>
<svg style="left:1902px;top:751px" width="6" height="9"><path d="M1,0.5L5,4.5L1,8.5" stroke="#333" fill="none" stroke-width="1.4"/></svg>
<div style="left:1639px;top:777px;width:279px;height:14px;background:#eeeeee;border:1px solid #9a9a9a;border-radius:2px"></div>
<div class="t" style="left:1639px;top:777.85px;font-size:12.7px;line-height:12.7px;color:#111;">Display CAD Layer</div>
<svg style="left:1888px;top:779px" width="8" height="11"><path d="M1.5,0.5H6.5V6.5H1.5Z M0,6.5H8 M4,6.5V11" stroke="#222" fill="none" stroke-width="1.2"/><rect x="3" y="1" width="2" height="5" fill="#222"/></svg>
<svg style="left:1905px;top:780px" width="9" height="9"><path d="M0.5,0.5L8.5,8.5M8.5,0.5L0.5,8.5" stroke="#222" stroke-width="1.1"/></svg>
<div style="left:1639px;top:792px;width:280px;height:290px;background:#fff;border:1px solid #a0a0a0"></div>
<svg style="left:1650px;top:797px" width="6" height="9"><path d="M0.5,0.5L4.5,4.5L0.5,8.5" stroke="#999" fill="none" stroke-width="1.1"/></svg>
<div style="left:1661px;top:801px;width:1px;height:1px;background:#888"></div>
<div style="left:1665px;top:795px;width:13px;height:12.5px;background:#fff;border:1px solid #333"></div>
<div class="t" style="left:1680.6px;top:796.78px;font-size:10.3px;line-height:10.3px;color:#111;">Picked up CAD Layer</div>
<svg style="left:1650px;top:813.6px" width="6" height="9"><path d="M0.5,0.5L4.5,4.5L0.5,8.5" stroke="#999" fill="none" stroke-width="1.1"/></svg>
<div style="left:1661px;top:817.6px;width:1px;height:1px;background:#888"></div>
<div style="left:1665px;top:811.6px;width:13px;height:12.5px;background:#fff;border:1px solid #333"></div>
<svg style="left:1666px;top:812.6px" width="11" height="10"><path d="M1.5,5L4.5,8.5L10,1.5" stroke="#222" fill="none" stroke-width="1.3"/></svg>
<div class="t" style="left:1680.6px;top:813.38px;font-size:10.3px;line-height:10.3px;color:#111;">Original CAD Layer</div>
</body></html>
